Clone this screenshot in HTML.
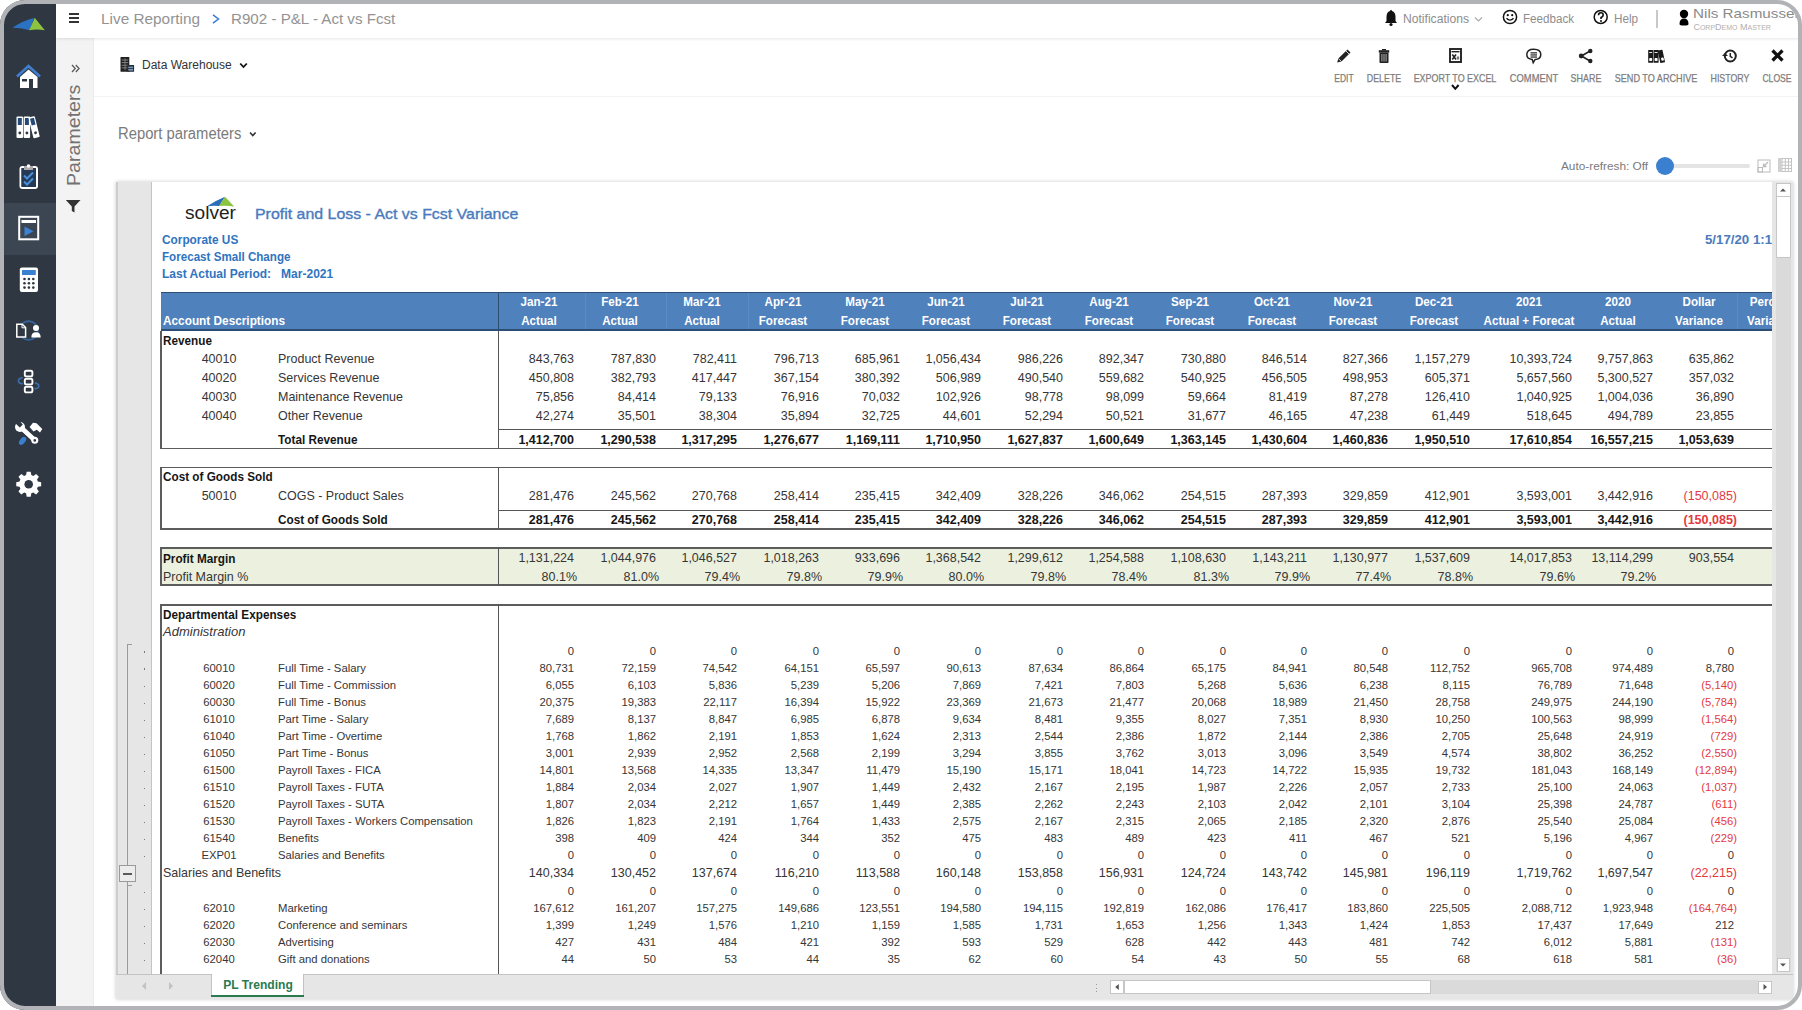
<!DOCTYPE html><html><head><meta charset="utf-8"><style>
*{box-sizing:border-box;margin:0;padding:0}
html,body{width:1802px;height:1010px;overflow:hidden;background:#fff;font-family:'Liberation Sans', sans-serif}
.t{position:absolute;white-space:nowrap}
.a{position:absolute}
svg{position:absolute;overflow:visible}
#app{position:absolute;left:0;top:0;width:1802px;height:1010px;border-radius:25px;overflow:hidden;background:#fff}
#frame{position:absolute;left:0;top:0;width:1802px;height:1010px;border:4px solid #b2b3b6;border-radius:25px;z-index:50}
</style></head><body>
<div id="app"><div class="a" style="left:0px;top:0px;width:56.00px;height:1010.00px;background:#2f3842;"></div><div class="a" style="left:0px;top:203px;width:56.00px;height:52.00px;background:#3c4652;"></div><svg style="left:0px;top:0px" width="56" height="40" viewBox="0 0 56 40"><path d="M12.5 27.8 Q22 21 33.8 18 L30 30.3 Q21 27.5 12.5 27.8Z" fill="#2c72c2"/><path d="M34.7 17.8 L44.8 30.3 Q37 28.5 29.2 30.3 Z" fill="#8cc43f"/></svg><svg style="left:0px;top:55px" width="56" height="40" viewBox="0 0 56 40"><path d="M17 21.5 L28.5 11 L40 21.5" fill="none" stroke="#3f7fd0" stroke-width="2.6"/><path d="M20 22 L28.5 14.5 L37.5 22 V33 H20Z" fill="#fff"/><rect x="22" y="24" width="5" height="2.5" fill="#2f3842"/><rect x="29" y="24" width="4" height="9" fill="#2f3842"/></svg><svg style="left:0px;top:110px" width="56" height="35" viewBox="0 0 56 35"><rect x="16.5" y="6.5" width="6.5" height="21.5" rx="1" fill="#fff"/><rect x="17.8" y="8" width="4" height="7" fill="#254a7a"/><circle cx="19.8" cy="23" r="1.4" fill="#2f3842"/>
<rect x="23.6" y="6.5" width="6.5" height="21.5" rx="1" fill="#fff"/><rect x="24.9" y="8" width="4" height="7" fill="#254a7a"/><circle cx="26.9" cy="23" r="1.4" fill="#2f3842"/>
<g transform="rotate(-14 34 17)"><rect x="30.8" y="6.5" width="6.5" height="21.5" rx="1" fill="#fff"/><rect x="32.1" y="8" width="4" height="7" fill="#254a7a"/><circle cx="34.1" cy="23" r="1.4" fill="#2f3842"/></g></svg><svg style="left:0px;top:160px" width="56" height="35" viewBox="0 0 56 35"><rect x="20.5" y="7" width="16.5" height="21" rx="2" fill="none" stroke="#fff" stroke-width="2"/><rect x="21.5" y="8" width="14.5" height="19" fill="#243a57"/><path d="M24 6 H33 V10 H24Z" fill="#aaa"/><circle cx="28.5" cy="6" r="1.8" fill="#fff"/>
<path d="M24 15.5 L27 18.5 L33 12.5 M24 21.5 L27 24.5 L33 18.5" fill="none" stroke="#4a90d9" stroke-width="2"/></svg><svg style="left:0px;top:210px" width="56" height="35" viewBox="0 0 56 35"><rect x="19.2" y="6.8" width="19" height="22.5" fill="none" stroke="#fff" stroke-width="2"/><rect x="21.5" y="10" width="14.5" height="3" fill="#fff"/><path d="M24.5 16.5 L33.5 21.3 L24.5 26 Z" fill="#3b82d6"/></svg><svg style="left:0px;top:262px" width="56" height="35" viewBox="0 0 56 35"><rect x="19.8" y="5.5" width="18.2" height="24.5" rx="2" fill="#fff"/><rect x="22" y="8" width="13.8" height="5" rx="0.5" fill="#3b7fd0"/>
<g fill="#2f3842"><circle cx="24.5" cy="17" r="1.3"/><circle cx="28.9" cy="17" r="1.3"/><circle cx="33.3" cy="17" r="1.3"/><circle cx="24.5" cy="21.3" r="1.3"/><circle cx="28.9" cy="21.3" r="1.3"/><circle cx="33.3" cy="21.3" r="1.3"/><circle cx="24.5" cy="25.6" r="1.3"/><circle cx="28.9" cy="25.6" r="1.3"/><circle cx="33.3" cy="25.6" r="1.3"/></g></svg><svg style="left:0px;top:313px" width="56" height="35" viewBox="0 0 56 35"><circle cx="28.6" cy="17.5" r="9.4" fill="none" stroke="#34649c" stroke-width="1.7"/>
<path d="M16.8 11.2 H22.3 L25.6 14.5 V24 H16.8Z" fill="#2f3842" stroke="#fff" stroke-width="1.5"/><path d="M22 11.5 V14.8 H25.3" fill="none" stroke="#fff" stroke-width="1"/><circle cx="36" cy="15" r="3" fill="#fff"/><path d="M31.3 24.5 Q31.3 19.3 36 19.3 Q40.7 19.3 40.7 24.5Z" fill="#fff"/></svg><svg style="left:0px;top:364px" width="56" height="35" viewBox="0 0 56 35"><path d="M22.5 13.8 Q17.8 14.5 18.5 17.5 Q19.3 20 22.8 19.6 M34.8 19 Q39.5 19.8 38.8 22.8 Q38 25 34.5 24.6" fill="none" stroke="#3a6fae" stroke-width="1.6"/>
<g fill="none" stroke="#fff" stroke-width="1.9"><rect x="24.8" y="6.8" width="7.6" height="5.6" rx="1.6"/><rect x="24.8" y="14.8" width="7.6" height="5.6" rx="1.6"/><rect x="24.8" y="22.8" width="7.6" height="5.6" rx="1.6"/></g></svg><svg style="left:0px;top:415px" width="56" height="35" viewBox="0 0 56 35"><ellipse cx="22.6" cy="25.8" rx="4.6" ry="2.7" transform="rotate(-52 22.6 25.8)" fill="#3b7fd0"/>
<path d="M21 12.5 L34.5 25" stroke="#fff" stroke-width="4.6" stroke-linecap="round"/><circle cx="34.8" cy="25.2" r="3.5" fill="#fff"/><circle cx="34.8" cy="25.4" r="1.3" fill="#2f3842"/>
<circle cx="20" cy="12" r="5" fill="#fff"/><path d="M18.2 4.5 L22.8 9.5 L19.8 12.5 L14.8 7.8 Z" fill="#2f3842"/>
<path d="M29.6 12 L33 7.8 L36.5 8.3 L42.3 14 L40 17.6 L36.8 14.8 L33.5 16.6 Z" fill="#fff"/></svg><svg style="left:0px;top:466px" width="56" height="35" viewBox="0 0 56 35"><polygon points="37.83,15.57 41.14,16.19 41.14,20.21 37.83,20.83 37.01,22.80 38.92,25.58 36.08,28.42 33.30,26.51 31.33,27.33 30.71,30.64 26.69,30.64 26.07,27.33 24.10,26.51 21.32,28.42 18.48,25.58 20.39,22.80 19.57,20.83 16.26,20.21 16.26,16.19 19.57,15.57 20.39,13.60 18.48,10.82 21.32,7.98 24.10,9.89 26.07,9.07 26.69,5.76 30.71,5.76 31.33,9.07 33.30,9.89 36.08,7.98 38.92,10.82 37.01,13.60" fill="#fff"/><circle cx="28.7" cy="18.2" r="4.3" fill="#2f3842"/></svg><div class="a" style="left:56px;top:38px;width:38.00px;height:972.00px;background:#f3f3f3;border-right:1px solid #ececec"></div><svg style="left:71px;top:64px" width="10" height="10" viewBox="0 0 10 10"><path d="M1 1 L4.3 4.5 L1 8 M4.8 1 L8.1 4.5 L4.8 8" fill="none" stroke="#555" stroke-width="1.2"/></svg><div class="t" style="left:80.5px;top:86px;font-size:18.5px;line-height:20px;color:#727272;transform:rotate(-90deg) scaleX(1.06);transform-origin:0 0;left:64px;top:186px;width:100px">Parameters</div><svg style="left:65px;top:199px" width="17" height="15" viewBox="0 0 17 15"><path d="M0.8 1 H15.5 L9.5 7.5 V13.5 L6.8 12 V7.5 Z" fill="#333"/></svg><div class="a" style="left:94px;top:96px;width:1704.00px;height:1.00px;background:#f3f3f3;"></div><svg style="left:119px;top:56px" width="17" height="17" viewBox="0 0 17 17"><rect x="1.5" y="1" width="8.8" height="14.8" rx="0.6" fill="#202020"/><g fill="#8a8a8a"><rect x="2.6" y="3.6" width="6.6" height="0.9"/><rect x="2.6" y="6.2" width="6.6" height="0.9"/><rect x="2.6" y="8.8" width="6.6" height="0.9"/><rect x="2.6" y="11.4" width="6.6" height="0.9"/><rect x="5.6" y="2.2" width="0.8" height="12"/></g><rect x="8.3" y="8.9" width="6.8" height="6.9" rx="0.6" fill="#262b33"/><g fill="#7895b8"><rect x="9.3" y="10.6" width="4.8" height="1.6"/><rect x="9.3" y="13" width="4.8" height="1.6"/></g></svg><div class="t" style="top:58.24px;font-size:12.3px;line-height:15px;color:#333;transform:scaleX(0.9767);transform-origin:0 0;left:141.50px;">Data Warehouse</div><svg style="left:239px;top:62px" width="10" height="8" viewBox="0 0 10 8"><path d="M1.2 1.5 L4.5 5 L7.8 1.5" fill="none" stroke="#111" stroke-width="1.8"/></svg><div class="t" style="top:123.86px;font-size:16px;line-height:20px;color:#7a7a7a;transform:scaleX(0.9243);transform-origin:0 0;left:117.70px;">Report parameters</div><svg style="left:249px;top:131px" width="9" height="7" viewBox="0 0 9 7"><path d="M1 1.5 L3.8 4.5 L6.6 1.5" fill="none" stroke="#333" stroke-width="1.6"/></svg><div class="t" style="top:71.53px;font-size:10.3px;line-height:13px;color:#7d7d7d;transform:scaleX(0.8269);transform-origin:50% 0;left:1193.60px;width:300px;text-align:center;-webkit-text-stroke:0.25px #7d7d7d;">EDIT</div><div class="t" style="top:71.53px;font-size:10.3px;line-height:13px;color:#7d7d7d;transform:scaleX(0.8585);transform-origin:50% 0;left:1233.80px;width:300px;text-align:center;-webkit-text-stroke:0.25px #7d7d7d;">DELETE</div><div class="t" style="top:71.53px;font-size:10.3px;line-height:13px;color:#7d7d7d;transform:scaleX(0.8667);transform-origin:50% 0;left:1305.15px;width:300px;text-align:center;-webkit-text-stroke:0.25px #7d7d7d;">EXPORT TO EXCEL</div><div class="t" style="top:71.53px;font-size:10.3px;line-height:13px;color:#7d7d7d;transform:scaleX(0.9077);transform-origin:50% 0;left:1383.65px;width:300px;text-align:center;-webkit-text-stroke:0.25px #7d7d7d;">COMMENT</div><div class="t" style="top:71.53px;font-size:10.3px;line-height:13px;color:#7d7d7d;transform:scaleX(0.8679);transform-origin:50% 0;left:1436.20px;width:300px;text-align:center;-webkit-text-stroke:0.25px #7d7d7d;">SHARE</div><div class="t" style="top:71.53px;font-size:10.3px;line-height:13px;color:#7d7d7d;transform:scaleX(0.8846);transform-origin:50% 0;left:1505.85px;width:300px;text-align:center;-webkit-text-stroke:0.25px #7d7d7d;">SEND TO ARCHIVE</div><div class="t" style="top:71.53px;font-size:10.3px;line-height:13px;color:#7d7d7d;transform:scaleX(0.8566);transform-origin:50% 0;left:1580.05px;width:300px;text-align:center;-webkit-text-stroke:0.25px #7d7d7d;">HISTORY</div><div class="t" style="top:71.53px;font-size:10.3px;line-height:13px;color:#7d7d7d;transform:scaleX(0.8362);transform-origin:50% 0;left:1627.40px;width:300px;text-align:center;-webkit-text-stroke:0.25px #7d7d7d;">CLOSE</div><svg style="left:1336px;top:48px" width="16" height="16" viewBox="0 0 16 16"><path d="M1.2 14.5 L2.3 10.5 L11.5 1.5 L14.5 4.5 L5.5 13.5 Z" fill="#222"/><path d="M2.3 10.5 L5.5 13.5" stroke="#fff" stroke-width="0.8"/><path d="M10 3 L13 6" stroke="#fff" stroke-width="0.8"/></svg><svg style="left:1378px;top:49px" width="12" height="15" viewBox="0 0 12 15"><rect x="0.8" y="1.2" width="10.4" height="2.4" fill="#222"/><rect x="4" y="0" width="4" height="1.5" fill="#222"/><path d="M1.5 3.6 H10.5 V13.2 Q10.5 14 9.7 14 H2.3 Q1.5 14 1.5 13.2Z" fill="#222"/><g fill="#999"><rect x="3.3" y="5" width="1.2" height="7.5"/><rect x="5.4" y="5" width="1.2" height="7.5"/><rect x="7.5" y="5" width="1.2" height="7.5"/></g></svg><svg style="left:1449px;top:48px" width="13" height="15" viewBox="0 0 13 15"><rect x="1" y="1" width="11" height="13" fill="none" stroke="#222" stroke-width="1.9"/><rect x="2.5" y="3" width="8" height="1.4" fill="#222"/><path d="M3.3 6.5 L7 11.5 M7 6.5 L3.3 11.5" stroke="#222" stroke-width="1.6"/><rect x="7.8" y="8.5" width="2.4" height="3" fill="#777"/></svg><svg style="left:1451px;top:84px" width="9" height="7" viewBox="0 0 9 7"><path d="M1 1 L4.3 4.8 L7.6 1" fill="none" stroke="#111" stroke-width="2"/></svg><svg style="left:1525px;top:48px" width="18" height="16" viewBox="0 0 18 16"><path d="M8.8 1.2 Q15.8 1.2 15.8 6.5 Q15.8 11.2 10 11.6 L8.2 14.6 L7.2 11.5 Q1.8 10.8 1.8 6.5 Q1.8 1.2 8.8 1.2Z" fill="none" stroke="#222" stroke-width="1.5"/><g fill="#333"><rect x="5.5" y="4.2" width="6.5" height="1.3"/><rect x="5.5" y="6.3" width="6.5" height="1.3"/><rect x="5.5" y="8.4" width="6.5" height="1.3"/></g></svg><svg style="left:1578px;top:48px" width="16" height="16" viewBox="0 0 16 16"><path d="M3.5 8 L12 3 M3.5 8 L12 13" stroke="#222" stroke-width="1.5"/><circle cx="3.2" cy="8" r="2.4" fill="#222"/><circle cx="12.3" cy="3" r="2.2" fill="#222"/><circle cx="12.3" cy="13" r="2.2" fill="#222"/></svg><svg style="left:1647px;top:48px" width="18" height="16" viewBox="0 0 18 16"><g fill="#1a1a1a"><rect x="1.2" y="2" width="5" height="12.8" rx="0.5"/><rect x="6.6" y="2" width="5" height="12.8" rx="0.5"/><rect x="12" y="2" width="4.8" height="12.8" rx="0.5" transform="rotate(-12 14.4 8.4)"/></g><g fill="#fff"><rect x="2.2" y="4" width="3" height="0.9"/><rect x="7.6" y="4" width="3" height="0.9"/><rect x="2.2" y="10" width="3" height="3" rx="0.8"/><rect x="7.6" y="10" width="3" height="3" rx="0.8"/></g><rect x="13.6" y="9.8" width="2.6" height="3" rx="0.8" transform="rotate(-12 14.4 8.4)" fill="#fff"/></svg><svg style="left:1721px;top:48px" width="17" height="16" viewBox="0 0 17 16"><circle cx="9.3" cy="8" r="5.5" fill="none" stroke="#222" stroke-width="2"/><path d="M1 8 L4 5 L7 8Z" fill="#222"/><path d="M9.3 5 V8.3 L11.5 9.8" fill="none" stroke="#222" stroke-width="1.5"/></svg><svg style="left:1770px;top:48px" width="15" height="15" viewBox="0 0 15 15"><path d="M2.5 2.5 L12.5 12.5 M12.5 2.5 L2.5 12.5" stroke="#111" stroke-width="3.3"/></svg><div class="t" style="top:158.55px;font-size:11.4px;line-height:14px;color:#7a7a7a;transform:scaleX(1.0362);transform-origin:0 0;left:1560.90px;">Auto-refresh: Off</div><div class="a" style="left:1664px;top:163.5px;width:86.00px;height:4.00px;background:#e4e4e4;border-radius:2px"></div><div class="a" style="left:1656px;top:157px;width:18px;height:18px;border-radius:50%;background:#3b7fd0"></div><svg style="left:1757px;top:159px" width="14" height="14" viewBox="0 0 14 14"><rect x="1" y="1" width="12" height="12" fill="none" stroke="#bbb" stroke-width="1"/><rect x="1" y="8.5" width="4.5" height="4.5" fill="none" stroke="#bbb" stroke-width="1"/><path d="M11 3 L6.5 7.5 M6.5 4.5 V7.5 H9.5" fill="none" stroke="#bbb" stroke-width="1.3"/></svg><svg style="left:1777px;top:157px" width="16" height="16" viewBox="0 0 16 16"><g fill="none" stroke="#c4c4c4" stroke-width="1"><rect x="1.5" y="1.5" width="13" height="13"/><path d="M1.5 5 H14.5 M1.5 8.3 H14.5 M1.5 11.5 H14.5 M5 1.5 V14.5 M8.3 1.5 V14.5 M11.5 1.5 V14.5"/></g><rect x="1" y="1" width="3.5" height="14" fill="#d0d0d0"/></svg><div class="a" style="left:116px;top:182px;width:1677.00px;height:817.00px;background:#e6e6e6;box-shadow:0 0 4px rgba(0,0,0,0.22)"></div><div class="a" style="left:152px;top:182px;width:1620.00px;height:792.00px;background:#ffffff;"></div><div class="a" style="left:151px;top:182px;width:1.00px;height:792.00px;background:#c9c9c9;"></div><div class="a" style="left:152px;top:182px;width:1620px;height:792px;overflow:hidden"><div class="a" style="left:-152px;top:-182px;width:1802px;height:1010px"><div class="a" style="left:161px;top:292px;width:1611.00px;height:38.50px;background:#4f81bd;"></div><div class="a" style="left:161px;top:291.5px;width:1611.00px;height:1.70px;background:#2c4d74;"></div><div class="a" style="left:161px;top:329.3px;width:1611.00px;height:1.50px;background:#2c4d74;"></div><div class="a" style="left:585.4px;top:293.2px;width:1.00px;height:36.10px;background:#5b8cc6;"></div><div class="a" style="left:666px;top:293.2px;width:1.00px;height:36.10px;background:#5b8cc6;"></div><div class="a" style="left:747.5px;top:293.2px;width:1.00px;height:36.10px;background:#5b8cc6;"></div><div class="a" style="left:1736.5px;top:293.2px;width:1.00px;height:36.10px;background:#5b8cc6;"></div><div class="a" style="left:498px;top:291.5px;width:1.00px;height:39.30px;background:#2c4d74;"></div><div class="t" style="top:312.67px;font-size:12.5px;line-height:16px;color:#ffffff;font-weight:bold;transform:scaleX(0.9450);transform-origin:0 0;left:162.50px;">Account Descriptions</div><div class="t" style="top:294.27px;font-size:12.5px;line-height:16px;color:#ffffff;font-weight:bold;transform:scaleX(0.9300);transform-origin:50% 0;left:439.00px;width:200px;text-align:center;">Jan-21</div><div class="t" style="top:312.57px;font-size:12.5px;line-height:16px;color:#ffffff;font-weight:bold;transform:scaleX(0.9300);transform-origin:50% 0;left:439.00px;width:200px;text-align:center;">Actual</div><div class="t" style="top:294.27px;font-size:12.5px;line-height:16px;color:#ffffff;font-weight:bold;transform:scaleX(0.9300);transform-origin:50% 0;left:520.39px;width:200px;text-align:center;">Feb-21</div><div class="t" style="top:312.57px;font-size:12.5px;line-height:16px;color:#ffffff;font-weight:bold;transform:scaleX(0.9300);transform-origin:50% 0;left:520.39px;width:200px;text-align:center;">Actual</div><div class="t" style="top:294.27px;font-size:12.5px;line-height:16px;color:#ffffff;font-weight:bold;transform:scaleX(0.9300);transform-origin:50% 0;left:601.78px;width:200px;text-align:center;">Mar-21</div><div class="t" style="top:312.57px;font-size:12.5px;line-height:16px;color:#ffffff;font-weight:bold;transform:scaleX(0.9300);transform-origin:50% 0;left:601.78px;width:200px;text-align:center;">Actual</div><div class="t" style="top:294.27px;font-size:12.5px;line-height:16px;color:#ffffff;font-weight:bold;transform:scaleX(0.9300);transform-origin:50% 0;left:683.17px;width:200px;text-align:center;">Apr-21</div><div class="t" style="top:312.57px;font-size:12.5px;line-height:16px;color:#ffffff;font-weight:bold;transform:scaleX(0.9300);transform-origin:50% 0;left:683.17px;width:200px;text-align:center;">Forecast</div><div class="t" style="top:294.27px;font-size:12.5px;line-height:16px;color:#ffffff;font-weight:bold;transform:scaleX(0.9300);transform-origin:50% 0;left:764.56px;width:200px;text-align:center;">May-21</div><div class="t" style="top:312.57px;font-size:12.5px;line-height:16px;color:#ffffff;font-weight:bold;transform:scaleX(0.9300);transform-origin:50% 0;left:764.56px;width:200px;text-align:center;">Forecast</div><div class="t" style="top:294.27px;font-size:12.5px;line-height:16px;color:#ffffff;font-weight:bold;transform:scaleX(0.9300);transform-origin:50% 0;left:845.95px;width:200px;text-align:center;">Jun-21</div><div class="t" style="top:312.57px;font-size:12.5px;line-height:16px;color:#ffffff;font-weight:bold;transform:scaleX(0.9300);transform-origin:50% 0;left:845.95px;width:200px;text-align:center;">Forecast</div><div class="t" style="top:294.27px;font-size:12.5px;line-height:16px;color:#ffffff;font-weight:bold;transform:scaleX(0.9300);transform-origin:50% 0;left:927.34px;width:200px;text-align:center;">Jul-21</div><div class="t" style="top:312.57px;font-size:12.5px;line-height:16px;color:#ffffff;font-weight:bold;transform:scaleX(0.9300);transform-origin:50% 0;left:927.34px;width:200px;text-align:center;">Forecast</div><div class="t" style="top:294.27px;font-size:12.5px;line-height:16px;color:#ffffff;font-weight:bold;transform:scaleX(0.9300);transform-origin:50% 0;left:1008.73px;width:200px;text-align:center;">Aug-21</div><div class="t" style="top:312.57px;font-size:12.5px;line-height:16px;color:#ffffff;font-weight:bold;transform:scaleX(0.9300);transform-origin:50% 0;left:1008.73px;width:200px;text-align:center;">Forecast</div><div class="t" style="top:294.27px;font-size:12.5px;line-height:16px;color:#ffffff;font-weight:bold;transform:scaleX(0.9300);transform-origin:50% 0;left:1090.12px;width:200px;text-align:center;">Sep-21</div><div class="t" style="top:312.57px;font-size:12.5px;line-height:16px;color:#ffffff;font-weight:bold;transform:scaleX(0.9300);transform-origin:50% 0;left:1090.12px;width:200px;text-align:center;">Forecast</div><div class="t" style="top:294.27px;font-size:12.5px;line-height:16px;color:#ffffff;font-weight:bold;transform:scaleX(0.9300);transform-origin:50% 0;left:1171.51px;width:200px;text-align:center;">Oct-21</div><div class="t" style="top:312.57px;font-size:12.5px;line-height:16px;color:#ffffff;font-weight:bold;transform:scaleX(0.9300);transform-origin:50% 0;left:1171.51px;width:200px;text-align:center;">Forecast</div><div class="t" style="top:294.27px;font-size:12.5px;line-height:16px;color:#ffffff;font-weight:bold;transform:scaleX(0.9300);transform-origin:50% 0;left:1252.90px;width:200px;text-align:center;">Nov-21</div><div class="t" style="top:312.57px;font-size:12.5px;line-height:16px;color:#ffffff;font-weight:bold;transform:scaleX(0.9300);transform-origin:50% 0;left:1252.90px;width:200px;text-align:center;">Forecast</div><div class="t" style="top:294.27px;font-size:12.5px;line-height:16px;color:#ffffff;font-weight:bold;transform:scaleX(0.9300);transform-origin:50% 0;left:1334.29px;width:200px;text-align:center;">Dec-21</div><div class="t" style="top:312.57px;font-size:12.5px;line-height:16px;color:#ffffff;font-weight:bold;transform:scaleX(0.9300);transform-origin:50% 0;left:1334.29px;width:200px;text-align:center;">Forecast</div><div class="t" style="top:294.27px;font-size:12.5px;line-height:16px;color:#ffffff;font-weight:bold;transform:scaleX(0.9300);transform-origin:50% 0;left:1428.50px;width:200px;text-align:center;">2021</div><div class="t" style="top:312.57px;font-size:12.5px;line-height:16px;color:#ffffff;font-weight:bold;transform:scaleX(0.9300);transform-origin:50% 0;left:1428.50px;width:200px;text-align:center;">Actual + Forecat</div><div class="t" style="top:294.27px;font-size:12.5px;line-height:16px;color:#ffffff;font-weight:bold;transform:scaleX(0.9300);transform-origin:50% 0;left:1518.30px;width:200px;text-align:center;">2020</div><div class="t" style="top:312.57px;font-size:12.5px;line-height:16px;color:#ffffff;font-weight:bold;transform:scaleX(0.9300);transform-origin:50% 0;left:1518.30px;width:200px;text-align:center;">Actual</div><div class="t" style="top:294.27px;font-size:12.5px;line-height:16px;color:#ffffff;font-weight:bold;transform:scaleX(0.9300);transform-origin:50% 0;left:1598.80px;width:200px;text-align:center;">Dollar</div><div class="t" style="top:312.57px;font-size:12.5px;line-height:16px;color:#ffffff;font-weight:bold;transform:scaleX(0.9300);transform-origin:50% 0;left:1598.80px;width:200px;text-align:center;">Variance</div><div class="t" style="top:294.27px;font-size:12.5px;line-height:16px;color:#ffffff;font-weight:bold;transform:scaleX(0.9300);transform-origin:50% 0;left:1671.00px;width:200px;text-align:center;">Percent</div><div class="t" style="top:312.57px;font-size:12.5px;line-height:16px;color:#ffffff;font-weight:bold;transform:scaleX(0.9300);transform-origin:50% 0;left:1671.00px;width:200px;text-align:center;">Variance</div><div class="t" style="top:332.70px;font-size:13.0px;line-height:16px;color:#161616;font-weight:bold;transform:scaleX(0.9038);transform-origin:0 0;left:162.80px;">Revenue</div><div class="t" style="top:351.33px;font-size:13.2px;line-height:16px;color:#363636;transform:scaleX(0.9470);transform-origin:50% 0;left:178.80px;width:80px;text-align:center;">40010</div><div class="t" style="top:351.33px;font-size:13.2px;line-height:16px;color:#363636;transform:scaleX(0.9470);transform-origin:0 0;left:278.30px;">Product Revenue</div><div class="t" style="top:351.33px;font-size:13.2px;line-height:16px;color:#363636;transform:scaleX(0.9470);transform-origin:100% 0;left:454.40px;width:120px;text-align:right;">843,763</div><div class="t" style="top:351.33px;font-size:13.2px;line-height:16px;color:#363636;transform:scaleX(0.9470);transform-origin:100% 0;left:535.80px;width:120px;text-align:right;">787,830</div><div class="t" style="top:351.33px;font-size:13.2px;line-height:16px;color:#363636;transform:scaleX(0.9470);transform-origin:100% 0;left:617.20px;width:120px;text-align:right;">782,411</div><div class="t" style="top:351.33px;font-size:13.2px;line-height:16px;color:#363636;transform:scaleX(0.9470);transform-origin:100% 0;left:698.60px;width:120px;text-align:right;">796,713</div><div class="t" style="top:351.33px;font-size:13.2px;line-height:16px;color:#363636;transform:scaleX(0.9470);transform-origin:100% 0;left:780.00px;width:120px;text-align:right;">685,961</div><div class="t" style="top:351.33px;font-size:13.2px;line-height:16px;color:#363636;transform:scaleX(0.9470);transform-origin:100% 0;left:861.40px;width:120px;text-align:right;">1,056,434</div><div class="t" style="top:351.33px;font-size:13.2px;line-height:16px;color:#363636;transform:scaleX(0.9470);transform-origin:100% 0;left:942.80px;width:120px;text-align:right;">986,226</div><div class="t" style="top:351.33px;font-size:13.2px;line-height:16px;color:#363636;transform:scaleX(0.9470);transform-origin:100% 0;left:1024.20px;width:120px;text-align:right;">892,347</div><div class="t" style="top:351.33px;font-size:13.2px;line-height:16px;color:#363636;transform:scaleX(0.9470);transform-origin:100% 0;left:1105.60px;width:120px;text-align:right;">730,880</div><div class="t" style="top:351.33px;font-size:13.2px;line-height:16px;color:#363636;transform:scaleX(0.9470);transform-origin:100% 0;left:1187.00px;width:120px;text-align:right;">846,514</div><div class="t" style="top:351.33px;font-size:13.2px;line-height:16px;color:#363636;transform:scaleX(0.9470);transform-origin:100% 0;left:1268.40px;width:120px;text-align:right;">827,366</div><div class="t" style="top:351.33px;font-size:13.2px;line-height:16px;color:#363636;transform:scaleX(0.9470);transform-origin:100% 0;left:1349.80px;width:120px;text-align:right;">1,157,279</div><div class="t" style="top:351.33px;font-size:13.2px;line-height:16px;color:#363636;transform:scaleX(0.9470);transform-origin:100% 0;left:1451.80px;width:120px;text-align:right;">10,393,724</div><div class="t" style="top:351.33px;font-size:13.2px;line-height:16px;color:#363636;transform:scaleX(0.9470);transform-origin:100% 0;left:1533.20px;width:120px;text-align:right;">9,757,863</div><div class="t" style="top:351.33px;font-size:13.2px;line-height:16px;color:#363636;transform:scaleX(0.9470);transform-origin:100% 0;left:1613.70px;width:120px;text-align:right;">635,862</div><div class="t" style="top:370.10px;font-size:13.2px;line-height:16px;color:#363636;transform:scaleX(0.9470);transform-origin:50% 0;left:178.80px;width:80px;text-align:center;">40020</div><div class="t" style="top:370.10px;font-size:13.2px;line-height:16px;color:#363636;transform:scaleX(0.9470);transform-origin:0 0;left:278.30px;">Services Revenue</div><div class="t" style="top:370.10px;font-size:13.2px;line-height:16px;color:#363636;transform:scaleX(0.9470);transform-origin:100% 0;left:454.40px;width:120px;text-align:right;">450,808</div><div class="t" style="top:370.10px;font-size:13.2px;line-height:16px;color:#363636;transform:scaleX(0.9470);transform-origin:100% 0;left:535.80px;width:120px;text-align:right;">382,793</div><div class="t" style="top:370.10px;font-size:13.2px;line-height:16px;color:#363636;transform:scaleX(0.9470);transform-origin:100% 0;left:617.20px;width:120px;text-align:right;">417,447</div><div class="t" style="top:370.10px;font-size:13.2px;line-height:16px;color:#363636;transform:scaleX(0.9470);transform-origin:100% 0;left:698.60px;width:120px;text-align:right;">367,154</div><div class="t" style="top:370.10px;font-size:13.2px;line-height:16px;color:#363636;transform:scaleX(0.9470);transform-origin:100% 0;left:780.00px;width:120px;text-align:right;">380,392</div><div class="t" style="top:370.10px;font-size:13.2px;line-height:16px;color:#363636;transform:scaleX(0.9470);transform-origin:100% 0;left:861.40px;width:120px;text-align:right;">506,989</div><div class="t" style="top:370.10px;font-size:13.2px;line-height:16px;color:#363636;transform:scaleX(0.9470);transform-origin:100% 0;left:942.80px;width:120px;text-align:right;">490,540</div><div class="t" style="top:370.10px;font-size:13.2px;line-height:16px;color:#363636;transform:scaleX(0.9470);transform-origin:100% 0;left:1024.20px;width:120px;text-align:right;">559,682</div><div class="t" style="top:370.10px;font-size:13.2px;line-height:16px;color:#363636;transform:scaleX(0.9470);transform-origin:100% 0;left:1105.60px;width:120px;text-align:right;">540,925</div><div class="t" style="top:370.10px;font-size:13.2px;line-height:16px;color:#363636;transform:scaleX(0.9470);transform-origin:100% 0;left:1187.00px;width:120px;text-align:right;">456,505</div><div class="t" style="top:370.10px;font-size:13.2px;line-height:16px;color:#363636;transform:scaleX(0.9470);transform-origin:100% 0;left:1268.40px;width:120px;text-align:right;">498,953</div><div class="t" style="top:370.10px;font-size:13.2px;line-height:16px;color:#363636;transform:scaleX(0.9470);transform-origin:100% 0;left:1349.80px;width:120px;text-align:right;">605,371</div><div class="t" style="top:370.10px;font-size:13.2px;line-height:16px;color:#363636;transform:scaleX(0.9470);transform-origin:100% 0;left:1451.80px;width:120px;text-align:right;">5,657,560</div><div class="t" style="top:370.10px;font-size:13.2px;line-height:16px;color:#363636;transform:scaleX(0.9470);transform-origin:100% 0;left:1533.20px;width:120px;text-align:right;">5,300,527</div><div class="t" style="top:370.10px;font-size:13.2px;line-height:16px;color:#363636;transform:scaleX(0.9470);transform-origin:100% 0;left:1613.70px;width:120px;text-align:right;">357,032</div><div class="t" style="top:388.87px;font-size:13.2px;line-height:16px;color:#363636;transform:scaleX(0.9470);transform-origin:50% 0;left:178.80px;width:80px;text-align:center;">40030</div><div class="t" style="top:388.87px;font-size:13.2px;line-height:16px;color:#363636;transform:scaleX(0.9470);transform-origin:0 0;left:278.30px;">Maintenance Revenue</div><div class="t" style="top:388.87px;font-size:13.2px;line-height:16px;color:#363636;transform:scaleX(0.9470);transform-origin:100% 0;left:454.40px;width:120px;text-align:right;">75,856</div><div class="t" style="top:388.87px;font-size:13.2px;line-height:16px;color:#363636;transform:scaleX(0.9470);transform-origin:100% 0;left:535.80px;width:120px;text-align:right;">84,414</div><div class="t" style="top:388.87px;font-size:13.2px;line-height:16px;color:#363636;transform:scaleX(0.9470);transform-origin:100% 0;left:617.20px;width:120px;text-align:right;">79,133</div><div class="t" style="top:388.87px;font-size:13.2px;line-height:16px;color:#363636;transform:scaleX(0.9470);transform-origin:100% 0;left:698.60px;width:120px;text-align:right;">76,916</div><div class="t" style="top:388.87px;font-size:13.2px;line-height:16px;color:#363636;transform:scaleX(0.9470);transform-origin:100% 0;left:780.00px;width:120px;text-align:right;">70,032</div><div class="t" style="top:388.87px;font-size:13.2px;line-height:16px;color:#363636;transform:scaleX(0.9470);transform-origin:100% 0;left:861.40px;width:120px;text-align:right;">102,926</div><div class="t" style="top:388.87px;font-size:13.2px;line-height:16px;color:#363636;transform:scaleX(0.9470);transform-origin:100% 0;left:942.80px;width:120px;text-align:right;">98,778</div><div class="t" style="top:388.87px;font-size:13.2px;line-height:16px;color:#363636;transform:scaleX(0.9470);transform-origin:100% 0;left:1024.20px;width:120px;text-align:right;">98,099</div><div class="t" style="top:388.87px;font-size:13.2px;line-height:16px;color:#363636;transform:scaleX(0.9470);transform-origin:100% 0;left:1105.60px;width:120px;text-align:right;">59,664</div><div class="t" style="top:388.87px;font-size:13.2px;line-height:16px;color:#363636;transform:scaleX(0.9470);transform-origin:100% 0;left:1187.00px;width:120px;text-align:right;">81,419</div><div class="t" style="top:388.87px;font-size:13.2px;line-height:16px;color:#363636;transform:scaleX(0.9470);transform-origin:100% 0;left:1268.40px;width:120px;text-align:right;">87,278</div><div class="t" style="top:388.87px;font-size:13.2px;line-height:16px;color:#363636;transform:scaleX(0.9470);transform-origin:100% 0;left:1349.80px;width:120px;text-align:right;">126,410</div><div class="t" style="top:388.87px;font-size:13.2px;line-height:16px;color:#363636;transform:scaleX(0.9470);transform-origin:100% 0;left:1451.80px;width:120px;text-align:right;">1,040,925</div><div class="t" style="top:388.87px;font-size:13.2px;line-height:16px;color:#363636;transform:scaleX(0.9470);transform-origin:100% 0;left:1533.20px;width:120px;text-align:right;">1,004,036</div><div class="t" style="top:388.87px;font-size:13.2px;line-height:16px;color:#363636;transform:scaleX(0.9470);transform-origin:100% 0;left:1613.70px;width:120px;text-align:right;">36,890</div><div class="t" style="top:407.64px;font-size:13.2px;line-height:16px;color:#363636;transform:scaleX(0.9470);transform-origin:50% 0;left:178.80px;width:80px;text-align:center;">40040</div><div class="t" style="top:407.64px;font-size:13.2px;line-height:16px;color:#363636;transform:scaleX(0.9470);transform-origin:0 0;left:278.30px;">Other Revenue</div><div class="t" style="top:407.64px;font-size:13.2px;line-height:16px;color:#363636;transform:scaleX(0.9470);transform-origin:100% 0;left:454.40px;width:120px;text-align:right;">42,274</div><div class="t" style="top:407.64px;font-size:13.2px;line-height:16px;color:#363636;transform:scaleX(0.9470);transform-origin:100% 0;left:535.80px;width:120px;text-align:right;">35,501</div><div class="t" style="top:407.64px;font-size:13.2px;line-height:16px;color:#363636;transform:scaleX(0.9470);transform-origin:100% 0;left:617.20px;width:120px;text-align:right;">38,304</div><div class="t" style="top:407.64px;font-size:13.2px;line-height:16px;color:#363636;transform:scaleX(0.9470);transform-origin:100% 0;left:698.60px;width:120px;text-align:right;">35,894</div><div class="t" style="top:407.64px;font-size:13.2px;line-height:16px;color:#363636;transform:scaleX(0.9470);transform-origin:100% 0;left:780.00px;width:120px;text-align:right;">32,725</div><div class="t" style="top:407.64px;font-size:13.2px;line-height:16px;color:#363636;transform:scaleX(0.9470);transform-origin:100% 0;left:861.40px;width:120px;text-align:right;">44,601</div><div class="t" style="top:407.64px;font-size:13.2px;line-height:16px;color:#363636;transform:scaleX(0.9470);transform-origin:100% 0;left:942.80px;width:120px;text-align:right;">52,294</div><div class="t" style="top:407.64px;font-size:13.2px;line-height:16px;color:#363636;transform:scaleX(0.9470);transform-origin:100% 0;left:1024.20px;width:120px;text-align:right;">50,521</div><div class="t" style="top:407.64px;font-size:13.2px;line-height:16px;color:#363636;transform:scaleX(0.9470);transform-origin:100% 0;left:1105.60px;width:120px;text-align:right;">31,677</div><div class="t" style="top:407.64px;font-size:13.2px;line-height:16px;color:#363636;transform:scaleX(0.9470);transform-origin:100% 0;left:1187.00px;width:120px;text-align:right;">46,165</div><div class="t" style="top:407.64px;font-size:13.2px;line-height:16px;color:#363636;transform:scaleX(0.9470);transform-origin:100% 0;left:1268.40px;width:120px;text-align:right;">47,238</div><div class="t" style="top:407.64px;font-size:13.2px;line-height:16px;color:#363636;transform:scaleX(0.9470);transform-origin:100% 0;left:1349.80px;width:120px;text-align:right;">61,449</div><div class="t" style="top:407.64px;font-size:13.2px;line-height:16px;color:#363636;transform:scaleX(0.9470);transform-origin:100% 0;left:1451.80px;width:120px;text-align:right;">518,645</div><div class="t" style="top:407.64px;font-size:13.2px;line-height:16px;color:#363636;transform:scaleX(0.9470);transform-origin:100% 0;left:1533.20px;width:120px;text-align:right;">494,789</div><div class="t" style="top:407.64px;font-size:13.2px;line-height:16px;color:#363636;transform:scaleX(0.9470);transform-origin:100% 0;left:1613.70px;width:120px;text-align:right;">23,855</div><div class="t" style="top:431.70px;font-size:13.0px;line-height:16px;color:#161616;font-weight:bold;transform:scaleX(0.9038);transform-origin:0 0;left:278.30px;">Total Revenue</div><div class="t" style="top:432.00px;font-size:13.0px;line-height:16px;color:#161616;font-weight:bold;transform:scaleX(0.9615);transform-origin:100% 0;left:454.40px;width:120px;text-align:right;">1,412,700</div><div class="t" style="top:432.00px;font-size:13.0px;line-height:16px;color:#161616;font-weight:bold;transform:scaleX(0.9615);transform-origin:100% 0;left:535.80px;width:120px;text-align:right;">1,290,538</div><div class="t" style="top:432.00px;font-size:13.0px;line-height:16px;color:#161616;font-weight:bold;transform:scaleX(0.9615);transform-origin:100% 0;left:617.20px;width:120px;text-align:right;">1,317,295</div><div class="t" style="top:432.00px;font-size:13.0px;line-height:16px;color:#161616;font-weight:bold;transform:scaleX(0.9615);transform-origin:100% 0;left:698.60px;width:120px;text-align:right;">1,276,677</div><div class="t" style="top:432.00px;font-size:13.0px;line-height:16px;color:#161616;font-weight:bold;transform:scaleX(0.9615);transform-origin:100% 0;left:780.00px;width:120px;text-align:right;">1,169,111</div><div class="t" style="top:432.00px;font-size:13.0px;line-height:16px;color:#161616;font-weight:bold;transform:scaleX(0.9615);transform-origin:100% 0;left:861.40px;width:120px;text-align:right;">1,710,950</div><div class="t" style="top:432.00px;font-size:13.0px;line-height:16px;color:#161616;font-weight:bold;transform:scaleX(0.9615);transform-origin:100% 0;left:942.80px;width:120px;text-align:right;">1,627,837</div><div class="t" style="top:432.00px;font-size:13.0px;line-height:16px;color:#161616;font-weight:bold;transform:scaleX(0.9615);transform-origin:100% 0;left:1024.20px;width:120px;text-align:right;">1,600,649</div><div class="t" style="top:432.00px;font-size:13.0px;line-height:16px;color:#161616;font-weight:bold;transform:scaleX(0.9615);transform-origin:100% 0;left:1105.60px;width:120px;text-align:right;">1,363,145</div><div class="t" style="top:432.00px;font-size:13.0px;line-height:16px;color:#161616;font-weight:bold;transform:scaleX(0.9615);transform-origin:100% 0;left:1187.00px;width:120px;text-align:right;">1,430,604</div><div class="t" style="top:432.00px;font-size:13.0px;line-height:16px;color:#161616;font-weight:bold;transform:scaleX(0.9615);transform-origin:100% 0;left:1268.40px;width:120px;text-align:right;">1,460,836</div><div class="t" style="top:432.00px;font-size:13.0px;line-height:16px;color:#161616;font-weight:bold;transform:scaleX(0.9615);transform-origin:100% 0;left:1349.80px;width:120px;text-align:right;">1,950,510</div><div class="t" style="top:432.00px;font-size:13.0px;line-height:16px;color:#161616;font-weight:bold;transform:scaleX(0.9615);transform-origin:100% 0;left:1451.80px;width:120px;text-align:right;">17,610,854</div><div class="t" style="top:432.00px;font-size:13.0px;line-height:16px;color:#161616;font-weight:bold;transform:scaleX(0.9615);transform-origin:100% 0;left:1533.20px;width:120px;text-align:right;">16,557,215</div><div class="t" style="top:432.00px;font-size:13.0px;line-height:16px;color:#161616;font-weight:bold;transform:scaleX(0.9615);transform-origin:100% 0;left:1613.70px;width:120px;text-align:right;">1,053,639</div><div class="a" style="left:160px;top:330.8px;width:2.00px;height:118.70px;background:#5c5c5c;"></div><div class="a" style="left:498px;top:330.8px;width:1.00px;height:118.70px;background:#555;"></div><div class="a" style="left:498px;top:428.8px;width:1274.00px;height:1.10px;background:#555;"></div><div class="a" style="left:160px;top:447.6px;width:1612.00px;height:1.90px;background:#5c5c5c;"></div><div class="a" style="left:160px;top:466.6px;width:1612.00px;height:1.80px;background:#5c5c5c;"></div><div class="a" style="left:160px;top:466.6px;width:2.00px;height:63.20px;background:#5c5c5c;"></div><div class="a" style="left:498px;top:466.6px;width:1.00px;height:63.20px;background:#555;"></div><div class="a" style="left:498px;top:509.5px;width:1274.00px;height:1.10px;background:#555;"></div><div class="a" style="left:160px;top:527.9px;width:1612.00px;height:1.90px;background:#5c5c5c;"></div><div class="t" style="top:469.40px;font-size:13.0px;line-height:16px;color:#161616;font-weight:bold;transform:scaleX(0.9038);transform-origin:0 0;left:162.80px;">Cost of Goods Sold</div><div class="t" style="top:488.43px;font-size:13.2px;line-height:16px;color:#363636;transform:scaleX(0.9470);transform-origin:50% 0;left:178.80px;width:80px;text-align:center;">50010</div><div class="t" style="top:488.43px;font-size:13.2px;line-height:16px;color:#363636;transform:scaleX(0.9470);transform-origin:0 0;left:278.30px;">COGS - Product Sales</div><div class="t" style="top:488.43px;font-size:13.2px;line-height:16px;color:#363636;transform:scaleX(0.9470);transform-origin:100% 0;left:454.40px;width:120px;text-align:right;">281,476</div><div class="t" style="top:488.43px;font-size:13.2px;line-height:16px;color:#363636;transform:scaleX(0.9470);transform-origin:100% 0;left:535.80px;width:120px;text-align:right;">245,562</div><div class="t" style="top:488.43px;font-size:13.2px;line-height:16px;color:#363636;transform:scaleX(0.9470);transform-origin:100% 0;left:617.20px;width:120px;text-align:right;">270,768</div><div class="t" style="top:488.43px;font-size:13.2px;line-height:16px;color:#363636;transform:scaleX(0.9470);transform-origin:100% 0;left:698.60px;width:120px;text-align:right;">258,414</div><div class="t" style="top:488.43px;font-size:13.2px;line-height:16px;color:#363636;transform:scaleX(0.9470);transform-origin:100% 0;left:780.00px;width:120px;text-align:right;">235,415</div><div class="t" style="top:488.43px;font-size:13.2px;line-height:16px;color:#363636;transform:scaleX(0.9470);transform-origin:100% 0;left:861.40px;width:120px;text-align:right;">342,409</div><div class="t" style="top:488.43px;font-size:13.2px;line-height:16px;color:#363636;transform:scaleX(0.9470);transform-origin:100% 0;left:942.80px;width:120px;text-align:right;">328,226</div><div class="t" style="top:488.43px;font-size:13.2px;line-height:16px;color:#363636;transform:scaleX(0.9470);transform-origin:100% 0;left:1024.20px;width:120px;text-align:right;">346,062</div><div class="t" style="top:488.43px;font-size:13.2px;line-height:16px;color:#363636;transform:scaleX(0.9470);transform-origin:100% 0;left:1105.60px;width:120px;text-align:right;">254,515</div><div class="t" style="top:488.43px;font-size:13.2px;line-height:16px;color:#363636;transform:scaleX(0.9470);transform-origin:100% 0;left:1187.00px;width:120px;text-align:right;">287,393</div><div class="t" style="top:488.43px;font-size:13.2px;line-height:16px;color:#363636;transform:scaleX(0.9470);transform-origin:100% 0;left:1268.40px;width:120px;text-align:right;">329,859</div><div class="t" style="top:488.43px;font-size:13.2px;line-height:16px;color:#363636;transform:scaleX(0.9470);transform-origin:100% 0;left:1349.80px;width:120px;text-align:right;">412,901</div><div class="t" style="top:488.43px;font-size:13.2px;line-height:16px;color:#363636;transform:scaleX(0.9470);transform-origin:100% 0;left:1451.80px;width:120px;text-align:right;">3,593,001</div><div class="t" style="top:488.43px;font-size:13.2px;line-height:16px;color:#363636;transform:scaleX(0.9470);transform-origin:100% 0;left:1533.20px;width:120px;text-align:right;">3,442,916</div><div class="t" style="top:488.43px;font-size:13.2px;line-height:16px;color:#e33a3f;transform:scaleX(0.9470);transform-origin:100% 0;left:1616.70px;width:120px;text-align:right;">(150,085)</div><div class="t" style="top:511.60px;font-size:13.0px;line-height:16px;color:#161616;font-weight:bold;transform:scaleX(0.9038);transform-origin:0 0;left:278.30px;">Cost of Goods Sold</div><div class="t" style="top:511.90px;font-size:13.0px;line-height:16px;color:#161616;font-weight:bold;transform:scaleX(0.9615);transform-origin:100% 0;left:454.40px;width:120px;text-align:right;">281,476</div><div class="t" style="top:511.90px;font-size:13.0px;line-height:16px;color:#161616;font-weight:bold;transform:scaleX(0.9615);transform-origin:100% 0;left:535.80px;width:120px;text-align:right;">245,562</div><div class="t" style="top:511.90px;font-size:13.0px;line-height:16px;color:#161616;font-weight:bold;transform:scaleX(0.9615);transform-origin:100% 0;left:617.20px;width:120px;text-align:right;">270,768</div><div class="t" style="top:511.90px;font-size:13.0px;line-height:16px;color:#161616;font-weight:bold;transform:scaleX(0.9615);transform-origin:100% 0;left:698.60px;width:120px;text-align:right;">258,414</div><div class="t" style="top:511.90px;font-size:13.0px;line-height:16px;color:#161616;font-weight:bold;transform:scaleX(0.9615);transform-origin:100% 0;left:780.00px;width:120px;text-align:right;">235,415</div><div class="t" style="top:511.90px;font-size:13.0px;line-height:16px;color:#161616;font-weight:bold;transform:scaleX(0.9615);transform-origin:100% 0;left:861.40px;width:120px;text-align:right;">342,409</div><div class="t" style="top:511.90px;font-size:13.0px;line-height:16px;color:#161616;font-weight:bold;transform:scaleX(0.9615);transform-origin:100% 0;left:942.80px;width:120px;text-align:right;">328,226</div><div class="t" style="top:511.90px;font-size:13.0px;line-height:16px;color:#161616;font-weight:bold;transform:scaleX(0.9615);transform-origin:100% 0;left:1024.20px;width:120px;text-align:right;">346,062</div><div class="t" style="top:511.90px;font-size:13.0px;line-height:16px;color:#161616;font-weight:bold;transform:scaleX(0.9615);transform-origin:100% 0;left:1105.60px;width:120px;text-align:right;">254,515</div><div class="t" style="top:511.90px;font-size:13.0px;line-height:16px;color:#161616;font-weight:bold;transform:scaleX(0.9615);transform-origin:100% 0;left:1187.00px;width:120px;text-align:right;">287,393</div><div class="t" style="top:511.90px;font-size:13.0px;line-height:16px;color:#161616;font-weight:bold;transform:scaleX(0.9615);transform-origin:100% 0;left:1268.40px;width:120px;text-align:right;">329,859</div><div class="t" style="top:511.90px;font-size:13.0px;line-height:16px;color:#161616;font-weight:bold;transform:scaleX(0.9615);transform-origin:100% 0;left:1349.80px;width:120px;text-align:right;">412,901</div><div class="t" style="top:511.90px;font-size:13.0px;line-height:16px;color:#161616;font-weight:bold;transform:scaleX(0.9615);transform-origin:100% 0;left:1451.80px;width:120px;text-align:right;">3,593,001</div><div class="t" style="top:511.90px;font-size:13.0px;line-height:16px;color:#161616;font-weight:bold;transform:scaleX(0.9615);transform-origin:100% 0;left:1533.20px;width:120px;text-align:right;">3,442,916</div><div class="t" style="top:511.90px;font-size:13.0px;line-height:16px;color:#e33a3f;font-weight:bold;transform:scaleX(0.9615);transform-origin:100% 0;left:1616.70px;width:120px;text-align:right;">(150,085)</div><div class="a" style="left:161px;top:548px;width:1611.00px;height:37.00px;background:#ebf1de;"></div><div class="a" style="left:160px;top:546.9px;width:1612.00px;height:1.80px;background:#5c5c5c;"></div><div class="a" style="left:160px;top:584.4px;width:1612.00px;height:1.80px;background:#5c5c5c;"></div><div class="a" style="left:160px;top:546.9px;width:2.00px;height:39.30px;background:#5c5c5c;"></div><div class="a" style="left:498px;top:546.9px;width:1.00px;height:39.30px;background:#555;"></div><div class="t" style="top:550.80px;font-size:13.0px;line-height:16px;color:#161616;font-weight:bold;transform:scaleX(0.9038);transform-origin:0 0;left:162.80px;">Profit Margin</div><div class="t" style="top:550.03px;font-size:13.2px;line-height:16px;color:#363636;transform:scaleX(0.9470);transform-origin:100% 0;left:454.40px;width:120px;text-align:right;">1,131,224</div><div class="t" style="top:550.03px;font-size:13.2px;line-height:16px;color:#363636;transform:scaleX(0.9470);transform-origin:100% 0;left:535.80px;width:120px;text-align:right;">1,044,976</div><div class="t" style="top:550.03px;font-size:13.2px;line-height:16px;color:#363636;transform:scaleX(0.9470);transform-origin:100% 0;left:617.20px;width:120px;text-align:right;">1,046,527</div><div class="t" style="top:550.03px;font-size:13.2px;line-height:16px;color:#363636;transform:scaleX(0.9470);transform-origin:100% 0;left:698.60px;width:120px;text-align:right;">1,018,263</div><div class="t" style="top:550.03px;font-size:13.2px;line-height:16px;color:#363636;transform:scaleX(0.9470);transform-origin:100% 0;left:780.00px;width:120px;text-align:right;">933,696</div><div class="t" style="top:550.03px;font-size:13.2px;line-height:16px;color:#363636;transform:scaleX(0.9470);transform-origin:100% 0;left:861.40px;width:120px;text-align:right;">1,368,542</div><div class="t" style="top:550.03px;font-size:13.2px;line-height:16px;color:#363636;transform:scaleX(0.9470);transform-origin:100% 0;left:942.80px;width:120px;text-align:right;">1,299,612</div><div class="t" style="top:550.03px;font-size:13.2px;line-height:16px;color:#363636;transform:scaleX(0.9470);transform-origin:100% 0;left:1024.20px;width:120px;text-align:right;">1,254,588</div><div class="t" style="top:550.03px;font-size:13.2px;line-height:16px;color:#363636;transform:scaleX(0.9470);transform-origin:100% 0;left:1105.60px;width:120px;text-align:right;">1,108,630</div><div class="t" style="top:550.03px;font-size:13.2px;line-height:16px;color:#363636;transform:scaleX(0.9470);transform-origin:100% 0;left:1187.00px;width:120px;text-align:right;">1,143,211</div><div class="t" style="top:550.03px;font-size:13.2px;line-height:16px;color:#363636;transform:scaleX(0.9470);transform-origin:100% 0;left:1268.40px;width:120px;text-align:right;">1,130,977</div><div class="t" style="top:550.03px;font-size:13.2px;line-height:16px;color:#363636;transform:scaleX(0.9470);transform-origin:100% 0;left:1349.80px;width:120px;text-align:right;">1,537,609</div><div class="t" style="top:550.03px;font-size:13.2px;line-height:16px;color:#363636;transform:scaleX(0.9470);transform-origin:100% 0;left:1451.80px;width:120px;text-align:right;">14,017,853</div><div class="t" style="top:550.03px;font-size:13.2px;line-height:16px;color:#363636;transform:scaleX(0.9470);transform-origin:100% 0;left:1533.20px;width:120px;text-align:right;">13,114,299</div><div class="t" style="top:550.03px;font-size:13.2px;line-height:16px;color:#363636;transform:scaleX(0.9470);transform-origin:100% 0;left:1613.70px;width:120px;text-align:right;">903,554</div><div class="t" style="top:568.73px;font-size:13.2px;line-height:16px;color:#363636;transform:scaleX(0.9470);transform-origin:0 0;left:162.80px;">Profit Margin %</div><div class="t" style="top:568.73px;font-size:13.2px;line-height:16px;color:#363636;transform:scaleX(0.9470);transform-origin:100% 0;left:457.40px;width:120px;text-align:right;">80.1%</div><div class="t" style="top:568.73px;font-size:13.2px;line-height:16px;color:#363636;transform:scaleX(0.9470);transform-origin:100% 0;left:538.80px;width:120px;text-align:right;">81.0%</div><div class="t" style="top:568.73px;font-size:13.2px;line-height:16px;color:#363636;transform:scaleX(0.9470);transform-origin:100% 0;left:620.20px;width:120px;text-align:right;">79.4%</div><div class="t" style="top:568.73px;font-size:13.2px;line-height:16px;color:#363636;transform:scaleX(0.9470);transform-origin:100% 0;left:701.60px;width:120px;text-align:right;">79.8%</div><div class="t" style="top:568.73px;font-size:13.2px;line-height:16px;color:#363636;transform:scaleX(0.9470);transform-origin:100% 0;left:783.00px;width:120px;text-align:right;">79.9%</div><div class="t" style="top:568.73px;font-size:13.2px;line-height:16px;color:#363636;transform:scaleX(0.9470);transform-origin:100% 0;left:864.40px;width:120px;text-align:right;">80.0%</div><div class="t" style="top:568.73px;font-size:13.2px;line-height:16px;color:#363636;transform:scaleX(0.9470);transform-origin:100% 0;left:945.80px;width:120px;text-align:right;">79.8%</div><div class="t" style="top:568.73px;font-size:13.2px;line-height:16px;color:#363636;transform:scaleX(0.9470);transform-origin:100% 0;left:1027.20px;width:120px;text-align:right;">78.4%</div><div class="t" style="top:568.73px;font-size:13.2px;line-height:16px;color:#363636;transform:scaleX(0.9470);transform-origin:100% 0;left:1108.60px;width:120px;text-align:right;">81.3%</div><div class="t" style="top:568.73px;font-size:13.2px;line-height:16px;color:#363636;transform:scaleX(0.9470);transform-origin:100% 0;left:1190.00px;width:120px;text-align:right;">79.9%</div><div class="t" style="top:568.73px;font-size:13.2px;line-height:16px;color:#363636;transform:scaleX(0.9470);transform-origin:100% 0;left:1271.40px;width:120px;text-align:right;">77.4%</div><div class="t" style="top:568.73px;font-size:13.2px;line-height:16px;color:#363636;transform:scaleX(0.9470);transform-origin:100% 0;left:1352.80px;width:120px;text-align:right;">78.8%</div><div class="t" style="top:568.73px;font-size:13.2px;line-height:16px;color:#363636;transform:scaleX(0.9470);transform-origin:100% 0;left:1454.80px;width:120px;text-align:right;">79.6%</div><div class="t" style="top:568.73px;font-size:13.2px;line-height:16px;color:#363636;transform:scaleX(0.9470);transform-origin:100% 0;left:1536.20px;width:120px;text-align:right;">79.2%</div><div class="a" style="left:160px;top:604.2px;width:1612.00px;height:1.80px;background:#5c5c5c;"></div><div class="a" style="left:160px;top:604.2px;width:2.00px;height:369.80px;background:#5c5c5c;"></div><div class="a" style="left:498px;top:604.2px;width:1.00px;height:369.80px;background:#555;"></div><div class="t" style="top:606.70px;font-size:13.0px;line-height:16px;color:#161616;font-weight:bold;transform:scaleX(0.9038);transform-origin:0 0;left:162.80px;">Departmental Expenses</div><div class="t" style="top:624.00px;font-size:13px;line-height:16px;color:#363636;font-style:italic;transform:scaleX(1.0016);transform-origin:0 0;left:162.80px;">Administration</div><div class="t" style="top:643.76px;font-size:11.8px;line-height:15px;color:#363636;transform:scaleX(0.9576);transform-origin:100% 0;left:454.40px;width:120px;text-align:right;">0</div><div class="t" style="top:643.76px;font-size:11.8px;line-height:15px;color:#363636;transform:scaleX(0.9576);transform-origin:100% 0;left:535.80px;width:120px;text-align:right;">0</div><div class="t" style="top:643.76px;font-size:11.8px;line-height:15px;color:#363636;transform:scaleX(0.9576);transform-origin:100% 0;left:617.20px;width:120px;text-align:right;">0</div><div class="t" style="top:643.76px;font-size:11.8px;line-height:15px;color:#363636;transform:scaleX(0.9576);transform-origin:100% 0;left:698.60px;width:120px;text-align:right;">0</div><div class="t" style="top:643.76px;font-size:11.8px;line-height:15px;color:#363636;transform:scaleX(0.9576);transform-origin:100% 0;left:780.00px;width:120px;text-align:right;">0</div><div class="t" style="top:643.76px;font-size:11.8px;line-height:15px;color:#363636;transform:scaleX(0.9576);transform-origin:100% 0;left:861.40px;width:120px;text-align:right;">0</div><div class="t" style="top:643.76px;font-size:11.8px;line-height:15px;color:#363636;transform:scaleX(0.9576);transform-origin:100% 0;left:942.80px;width:120px;text-align:right;">0</div><div class="t" style="top:643.76px;font-size:11.8px;line-height:15px;color:#363636;transform:scaleX(0.9576);transform-origin:100% 0;left:1024.20px;width:120px;text-align:right;">0</div><div class="t" style="top:643.76px;font-size:11.8px;line-height:15px;color:#363636;transform:scaleX(0.9576);transform-origin:100% 0;left:1105.60px;width:120px;text-align:right;">0</div><div class="t" style="top:643.76px;font-size:11.8px;line-height:15px;color:#363636;transform:scaleX(0.9576);transform-origin:100% 0;left:1187.00px;width:120px;text-align:right;">0</div><div class="t" style="top:643.76px;font-size:11.8px;line-height:15px;color:#363636;transform:scaleX(0.9576);transform-origin:100% 0;left:1268.40px;width:120px;text-align:right;">0</div><div class="t" style="top:643.76px;font-size:11.8px;line-height:15px;color:#363636;transform:scaleX(0.9576);transform-origin:100% 0;left:1349.80px;width:120px;text-align:right;">0</div><div class="t" style="top:643.76px;font-size:11.8px;line-height:15px;color:#363636;transform:scaleX(0.9576);transform-origin:100% 0;left:1451.80px;width:120px;text-align:right;">0</div><div class="t" style="top:643.76px;font-size:11.8px;line-height:15px;color:#363636;transform:scaleX(0.9576);transform-origin:100% 0;left:1533.20px;width:120px;text-align:right;">0</div><div class="t" style="top:643.76px;font-size:11.8px;line-height:15px;color:#363636;transform:scaleX(0.9576);transform-origin:100% 0;left:1613.70px;width:120px;text-align:right;">0</div><div class="t" style="top:660.81px;font-size:11.8px;line-height:15px;color:#363636;transform:scaleX(0.9576);transform-origin:50% 0;left:178.80px;width:80px;text-align:center;">60010</div><div class="t" style="top:660.81px;font-size:11.8px;line-height:15px;color:#363636;transform:scaleX(0.9576);transform-origin:0 0;left:278.30px;">Full Time - Salary</div><div class="t" style="top:660.81px;font-size:11.8px;line-height:15px;color:#363636;transform:scaleX(0.9576);transform-origin:100% 0;left:454.40px;width:120px;text-align:right;">80,731</div><div class="t" style="top:660.81px;font-size:11.8px;line-height:15px;color:#363636;transform:scaleX(0.9576);transform-origin:100% 0;left:535.80px;width:120px;text-align:right;">72,159</div><div class="t" style="top:660.81px;font-size:11.8px;line-height:15px;color:#363636;transform:scaleX(0.9576);transform-origin:100% 0;left:617.20px;width:120px;text-align:right;">74,542</div><div class="t" style="top:660.81px;font-size:11.8px;line-height:15px;color:#363636;transform:scaleX(0.9576);transform-origin:100% 0;left:698.60px;width:120px;text-align:right;">64,151</div><div class="t" style="top:660.81px;font-size:11.8px;line-height:15px;color:#363636;transform:scaleX(0.9576);transform-origin:100% 0;left:780.00px;width:120px;text-align:right;">65,597</div><div class="t" style="top:660.81px;font-size:11.8px;line-height:15px;color:#363636;transform:scaleX(0.9576);transform-origin:100% 0;left:861.40px;width:120px;text-align:right;">90,613</div><div class="t" style="top:660.81px;font-size:11.8px;line-height:15px;color:#363636;transform:scaleX(0.9576);transform-origin:100% 0;left:942.80px;width:120px;text-align:right;">87,634</div><div class="t" style="top:660.81px;font-size:11.8px;line-height:15px;color:#363636;transform:scaleX(0.9576);transform-origin:100% 0;left:1024.20px;width:120px;text-align:right;">86,864</div><div class="t" style="top:660.81px;font-size:11.8px;line-height:15px;color:#363636;transform:scaleX(0.9576);transform-origin:100% 0;left:1105.60px;width:120px;text-align:right;">65,175</div><div class="t" style="top:660.81px;font-size:11.8px;line-height:15px;color:#363636;transform:scaleX(0.9576);transform-origin:100% 0;left:1187.00px;width:120px;text-align:right;">84,941</div><div class="t" style="top:660.81px;font-size:11.8px;line-height:15px;color:#363636;transform:scaleX(0.9576);transform-origin:100% 0;left:1268.40px;width:120px;text-align:right;">80,548</div><div class="t" style="top:660.81px;font-size:11.8px;line-height:15px;color:#363636;transform:scaleX(0.9576);transform-origin:100% 0;left:1349.80px;width:120px;text-align:right;">112,752</div><div class="t" style="top:660.81px;font-size:11.8px;line-height:15px;color:#363636;transform:scaleX(0.9576);transform-origin:100% 0;left:1451.80px;width:120px;text-align:right;">965,708</div><div class="t" style="top:660.81px;font-size:11.8px;line-height:15px;color:#363636;transform:scaleX(0.9576);transform-origin:100% 0;left:1533.20px;width:120px;text-align:right;">974,489</div><div class="t" style="top:660.81px;font-size:11.8px;line-height:15px;color:#363636;transform:scaleX(0.9576);transform-origin:100% 0;left:1613.70px;width:120px;text-align:right;">8,780</div><div class="t" style="top:677.86px;font-size:11.8px;line-height:15px;color:#363636;transform:scaleX(0.9576);transform-origin:50% 0;left:178.80px;width:80px;text-align:center;">60020</div><div class="t" style="top:677.86px;font-size:11.8px;line-height:15px;color:#363636;transform:scaleX(0.9576);transform-origin:0 0;left:278.30px;">Full Time - Commission</div><div class="t" style="top:677.86px;font-size:11.8px;line-height:15px;color:#363636;transform:scaleX(0.9576);transform-origin:100% 0;left:454.40px;width:120px;text-align:right;">6,055</div><div class="t" style="top:677.86px;font-size:11.8px;line-height:15px;color:#363636;transform:scaleX(0.9576);transform-origin:100% 0;left:535.80px;width:120px;text-align:right;">6,103</div><div class="t" style="top:677.86px;font-size:11.8px;line-height:15px;color:#363636;transform:scaleX(0.9576);transform-origin:100% 0;left:617.20px;width:120px;text-align:right;">5,836</div><div class="t" style="top:677.86px;font-size:11.8px;line-height:15px;color:#363636;transform:scaleX(0.9576);transform-origin:100% 0;left:698.60px;width:120px;text-align:right;">5,239</div><div class="t" style="top:677.86px;font-size:11.8px;line-height:15px;color:#363636;transform:scaleX(0.9576);transform-origin:100% 0;left:780.00px;width:120px;text-align:right;">5,206</div><div class="t" style="top:677.86px;font-size:11.8px;line-height:15px;color:#363636;transform:scaleX(0.9576);transform-origin:100% 0;left:861.40px;width:120px;text-align:right;">7,869</div><div class="t" style="top:677.86px;font-size:11.8px;line-height:15px;color:#363636;transform:scaleX(0.9576);transform-origin:100% 0;left:942.80px;width:120px;text-align:right;">7,421</div><div class="t" style="top:677.86px;font-size:11.8px;line-height:15px;color:#363636;transform:scaleX(0.9576);transform-origin:100% 0;left:1024.20px;width:120px;text-align:right;">7,803</div><div class="t" style="top:677.86px;font-size:11.8px;line-height:15px;color:#363636;transform:scaleX(0.9576);transform-origin:100% 0;left:1105.60px;width:120px;text-align:right;">5,268</div><div class="t" style="top:677.86px;font-size:11.8px;line-height:15px;color:#363636;transform:scaleX(0.9576);transform-origin:100% 0;left:1187.00px;width:120px;text-align:right;">5,636</div><div class="t" style="top:677.86px;font-size:11.8px;line-height:15px;color:#363636;transform:scaleX(0.9576);transform-origin:100% 0;left:1268.40px;width:120px;text-align:right;">6,238</div><div class="t" style="top:677.86px;font-size:11.8px;line-height:15px;color:#363636;transform:scaleX(0.9576);transform-origin:100% 0;left:1349.80px;width:120px;text-align:right;">8,115</div><div class="t" style="top:677.86px;font-size:11.8px;line-height:15px;color:#363636;transform:scaleX(0.9576);transform-origin:100% 0;left:1451.80px;width:120px;text-align:right;">76,789</div><div class="t" style="top:677.86px;font-size:11.8px;line-height:15px;color:#363636;transform:scaleX(0.9576);transform-origin:100% 0;left:1533.20px;width:120px;text-align:right;">71,648</div><div class="t" style="top:677.86px;font-size:11.8px;line-height:15px;color:#e33a3f;transform:scaleX(0.9576);transform-origin:100% 0;left:1616.70px;width:120px;text-align:right;">(5,140)</div><div class="t" style="top:694.91px;font-size:11.8px;line-height:15px;color:#363636;transform:scaleX(0.9576);transform-origin:50% 0;left:178.80px;width:80px;text-align:center;">60030</div><div class="t" style="top:694.91px;font-size:11.8px;line-height:15px;color:#363636;transform:scaleX(0.9576);transform-origin:0 0;left:278.30px;">Full Time - Bonus</div><div class="t" style="top:694.91px;font-size:11.8px;line-height:15px;color:#363636;transform:scaleX(0.9576);transform-origin:100% 0;left:454.40px;width:120px;text-align:right;">20,375</div><div class="t" style="top:694.91px;font-size:11.8px;line-height:15px;color:#363636;transform:scaleX(0.9576);transform-origin:100% 0;left:535.80px;width:120px;text-align:right;">19,383</div><div class="t" style="top:694.91px;font-size:11.8px;line-height:15px;color:#363636;transform:scaleX(0.9576);transform-origin:100% 0;left:617.20px;width:120px;text-align:right;">22,117</div><div class="t" style="top:694.91px;font-size:11.8px;line-height:15px;color:#363636;transform:scaleX(0.9576);transform-origin:100% 0;left:698.60px;width:120px;text-align:right;">16,394</div><div class="t" style="top:694.91px;font-size:11.8px;line-height:15px;color:#363636;transform:scaleX(0.9576);transform-origin:100% 0;left:780.00px;width:120px;text-align:right;">15,922</div><div class="t" style="top:694.91px;font-size:11.8px;line-height:15px;color:#363636;transform:scaleX(0.9576);transform-origin:100% 0;left:861.40px;width:120px;text-align:right;">23,369</div><div class="t" style="top:694.91px;font-size:11.8px;line-height:15px;color:#363636;transform:scaleX(0.9576);transform-origin:100% 0;left:942.80px;width:120px;text-align:right;">21,673</div><div class="t" style="top:694.91px;font-size:11.8px;line-height:15px;color:#363636;transform:scaleX(0.9576);transform-origin:100% 0;left:1024.20px;width:120px;text-align:right;">21,477</div><div class="t" style="top:694.91px;font-size:11.8px;line-height:15px;color:#363636;transform:scaleX(0.9576);transform-origin:100% 0;left:1105.60px;width:120px;text-align:right;">20,068</div><div class="t" style="top:694.91px;font-size:11.8px;line-height:15px;color:#363636;transform:scaleX(0.9576);transform-origin:100% 0;left:1187.00px;width:120px;text-align:right;">18,989</div><div class="t" style="top:694.91px;font-size:11.8px;line-height:15px;color:#363636;transform:scaleX(0.9576);transform-origin:100% 0;left:1268.40px;width:120px;text-align:right;">21,450</div><div class="t" style="top:694.91px;font-size:11.8px;line-height:15px;color:#363636;transform:scaleX(0.9576);transform-origin:100% 0;left:1349.80px;width:120px;text-align:right;">28,758</div><div class="t" style="top:694.91px;font-size:11.8px;line-height:15px;color:#363636;transform:scaleX(0.9576);transform-origin:100% 0;left:1451.80px;width:120px;text-align:right;">249,975</div><div class="t" style="top:694.91px;font-size:11.8px;line-height:15px;color:#363636;transform:scaleX(0.9576);transform-origin:100% 0;left:1533.20px;width:120px;text-align:right;">244,190</div><div class="t" style="top:694.91px;font-size:11.8px;line-height:15px;color:#e33a3f;transform:scaleX(0.9576);transform-origin:100% 0;left:1616.70px;width:120px;text-align:right;">(5,784)</div><div class="t" style="top:711.96px;font-size:11.8px;line-height:15px;color:#363636;transform:scaleX(0.9576);transform-origin:50% 0;left:178.80px;width:80px;text-align:center;">61010</div><div class="t" style="top:711.96px;font-size:11.8px;line-height:15px;color:#363636;transform:scaleX(0.9576);transform-origin:0 0;left:278.30px;">Part Time - Salary</div><div class="t" style="top:711.96px;font-size:11.8px;line-height:15px;color:#363636;transform:scaleX(0.9576);transform-origin:100% 0;left:454.40px;width:120px;text-align:right;">7,689</div><div class="t" style="top:711.96px;font-size:11.8px;line-height:15px;color:#363636;transform:scaleX(0.9576);transform-origin:100% 0;left:535.80px;width:120px;text-align:right;">8,137</div><div class="t" style="top:711.96px;font-size:11.8px;line-height:15px;color:#363636;transform:scaleX(0.9576);transform-origin:100% 0;left:617.20px;width:120px;text-align:right;">8,847</div><div class="t" style="top:711.96px;font-size:11.8px;line-height:15px;color:#363636;transform:scaleX(0.9576);transform-origin:100% 0;left:698.60px;width:120px;text-align:right;">6,985</div><div class="t" style="top:711.96px;font-size:11.8px;line-height:15px;color:#363636;transform:scaleX(0.9576);transform-origin:100% 0;left:780.00px;width:120px;text-align:right;">6,878</div><div class="t" style="top:711.96px;font-size:11.8px;line-height:15px;color:#363636;transform:scaleX(0.9576);transform-origin:100% 0;left:861.40px;width:120px;text-align:right;">9,634</div><div class="t" style="top:711.96px;font-size:11.8px;line-height:15px;color:#363636;transform:scaleX(0.9576);transform-origin:100% 0;left:942.80px;width:120px;text-align:right;">8,481</div><div class="t" style="top:711.96px;font-size:11.8px;line-height:15px;color:#363636;transform:scaleX(0.9576);transform-origin:100% 0;left:1024.20px;width:120px;text-align:right;">9,355</div><div class="t" style="top:711.96px;font-size:11.8px;line-height:15px;color:#363636;transform:scaleX(0.9576);transform-origin:100% 0;left:1105.60px;width:120px;text-align:right;">8,027</div><div class="t" style="top:711.96px;font-size:11.8px;line-height:15px;color:#363636;transform:scaleX(0.9576);transform-origin:100% 0;left:1187.00px;width:120px;text-align:right;">7,351</div><div class="t" style="top:711.96px;font-size:11.8px;line-height:15px;color:#363636;transform:scaleX(0.9576);transform-origin:100% 0;left:1268.40px;width:120px;text-align:right;">8,930</div><div class="t" style="top:711.96px;font-size:11.8px;line-height:15px;color:#363636;transform:scaleX(0.9576);transform-origin:100% 0;left:1349.80px;width:120px;text-align:right;">10,250</div><div class="t" style="top:711.96px;font-size:11.8px;line-height:15px;color:#363636;transform:scaleX(0.9576);transform-origin:100% 0;left:1451.80px;width:120px;text-align:right;">100,563</div><div class="t" style="top:711.96px;font-size:11.8px;line-height:15px;color:#363636;transform:scaleX(0.9576);transform-origin:100% 0;left:1533.20px;width:120px;text-align:right;">98,999</div><div class="t" style="top:711.96px;font-size:11.8px;line-height:15px;color:#e33a3f;transform:scaleX(0.9576);transform-origin:100% 0;left:1616.70px;width:120px;text-align:right;">(1,564)</div><div class="t" style="top:729.01px;font-size:11.8px;line-height:15px;color:#363636;transform:scaleX(0.9576);transform-origin:50% 0;left:178.80px;width:80px;text-align:center;">61040</div><div class="t" style="top:729.01px;font-size:11.8px;line-height:15px;color:#363636;transform:scaleX(0.9576);transform-origin:0 0;left:278.30px;">Part Time - Overtime</div><div class="t" style="top:729.01px;font-size:11.8px;line-height:15px;color:#363636;transform:scaleX(0.9576);transform-origin:100% 0;left:454.40px;width:120px;text-align:right;">1,768</div><div class="t" style="top:729.01px;font-size:11.8px;line-height:15px;color:#363636;transform:scaleX(0.9576);transform-origin:100% 0;left:535.80px;width:120px;text-align:right;">1,862</div><div class="t" style="top:729.01px;font-size:11.8px;line-height:15px;color:#363636;transform:scaleX(0.9576);transform-origin:100% 0;left:617.20px;width:120px;text-align:right;">2,191</div><div class="t" style="top:729.01px;font-size:11.8px;line-height:15px;color:#363636;transform:scaleX(0.9576);transform-origin:100% 0;left:698.60px;width:120px;text-align:right;">1,853</div><div class="t" style="top:729.01px;font-size:11.8px;line-height:15px;color:#363636;transform:scaleX(0.9576);transform-origin:100% 0;left:780.00px;width:120px;text-align:right;">1,624</div><div class="t" style="top:729.01px;font-size:11.8px;line-height:15px;color:#363636;transform:scaleX(0.9576);transform-origin:100% 0;left:861.40px;width:120px;text-align:right;">2,313</div><div class="t" style="top:729.01px;font-size:11.8px;line-height:15px;color:#363636;transform:scaleX(0.9576);transform-origin:100% 0;left:942.80px;width:120px;text-align:right;">2,544</div><div class="t" style="top:729.01px;font-size:11.8px;line-height:15px;color:#363636;transform:scaleX(0.9576);transform-origin:100% 0;left:1024.20px;width:120px;text-align:right;">2,386</div><div class="t" style="top:729.01px;font-size:11.8px;line-height:15px;color:#363636;transform:scaleX(0.9576);transform-origin:100% 0;left:1105.60px;width:120px;text-align:right;">1,872</div><div class="t" style="top:729.01px;font-size:11.8px;line-height:15px;color:#363636;transform:scaleX(0.9576);transform-origin:100% 0;left:1187.00px;width:120px;text-align:right;">2,144</div><div class="t" style="top:729.01px;font-size:11.8px;line-height:15px;color:#363636;transform:scaleX(0.9576);transform-origin:100% 0;left:1268.40px;width:120px;text-align:right;">2,386</div><div class="t" style="top:729.01px;font-size:11.8px;line-height:15px;color:#363636;transform:scaleX(0.9576);transform-origin:100% 0;left:1349.80px;width:120px;text-align:right;">2,705</div><div class="t" style="top:729.01px;font-size:11.8px;line-height:15px;color:#363636;transform:scaleX(0.9576);transform-origin:100% 0;left:1451.80px;width:120px;text-align:right;">25,648</div><div class="t" style="top:729.01px;font-size:11.8px;line-height:15px;color:#363636;transform:scaleX(0.9576);transform-origin:100% 0;left:1533.20px;width:120px;text-align:right;">24,919</div><div class="t" style="top:729.01px;font-size:11.8px;line-height:15px;color:#e33a3f;transform:scaleX(0.9576);transform-origin:100% 0;left:1616.70px;width:120px;text-align:right;">(729)</div><div class="t" style="top:746.06px;font-size:11.8px;line-height:15px;color:#363636;transform:scaleX(0.9576);transform-origin:50% 0;left:178.80px;width:80px;text-align:center;">61050</div><div class="t" style="top:746.06px;font-size:11.8px;line-height:15px;color:#363636;transform:scaleX(0.9576);transform-origin:0 0;left:278.30px;">Part Time - Bonus</div><div class="t" style="top:746.06px;font-size:11.8px;line-height:15px;color:#363636;transform:scaleX(0.9576);transform-origin:100% 0;left:454.40px;width:120px;text-align:right;">3,001</div><div class="t" style="top:746.06px;font-size:11.8px;line-height:15px;color:#363636;transform:scaleX(0.9576);transform-origin:100% 0;left:535.80px;width:120px;text-align:right;">2,939</div><div class="t" style="top:746.06px;font-size:11.8px;line-height:15px;color:#363636;transform:scaleX(0.9576);transform-origin:100% 0;left:617.20px;width:120px;text-align:right;">2,952</div><div class="t" style="top:746.06px;font-size:11.8px;line-height:15px;color:#363636;transform:scaleX(0.9576);transform-origin:100% 0;left:698.60px;width:120px;text-align:right;">2,568</div><div class="t" style="top:746.06px;font-size:11.8px;line-height:15px;color:#363636;transform:scaleX(0.9576);transform-origin:100% 0;left:780.00px;width:120px;text-align:right;">2,199</div><div class="t" style="top:746.06px;font-size:11.8px;line-height:15px;color:#363636;transform:scaleX(0.9576);transform-origin:100% 0;left:861.40px;width:120px;text-align:right;">3,294</div><div class="t" style="top:746.06px;font-size:11.8px;line-height:15px;color:#363636;transform:scaleX(0.9576);transform-origin:100% 0;left:942.80px;width:120px;text-align:right;">3,855</div><div class="t" style="top:746.06px;font-size:11.8px;line-height:15px;color:#363636;transform:scaleX(0.9576);transform-origin:100% 0;left:1024.20px;width:120px;text-align:right;">3,762</div><div class="t" style="top:746.06px;font-size:11.8px;line-height:15px;color:#363636;transform:scaleX(0.9576);transform-origin:100% 0;left:1105.60px;width:120px;text-align:right;">3,013</div><div class="t" style="top:746.06px;font-size:11.8px;line-height:15px;color:#363636;transform:scaleX(0.9576);transform-origin:100% 0;left:1187.00px;width:120px;text-align:right;">3,096</div><div class="t" style="top:746.06px;font-size:11.8px;line-height:15px;color:#363636;transform:scaleX(0.9576);transform-origin:100% 0;left:1268.40px;width:120px;text-align:right;">3,549</div><div class="t" style="top:746.06px;font-size:11.8px;line-height:15px;color:#363636;transform:scaleX(0.9576);transform-origin:100% 0;left:1349.80px;width:120px;text-align:right;">4,574</div><div class="t" style="top:746.06px;font-size:11.8px;line-height:15px;color:#363636;transform:scaleX(0.9576);transform-origin:100% 0;left:1451.80px;width:120px;text-align:right;">38,802</div><div class="t" style="top:746.06px;font-size:11.8px;line-height:15px;color:#363636;transform:scaleX(0.9576);transform-origin:100% 0;left:1533.20px;width:120px;text-align:right;">36,252</div><div class="t" style="top:746.06px;font-size:11.8px;line-height:15px;color:#e33a3f;transform:scaleX(0.9576);transform-origin:100% 0;left:1616.70px;width:120px;text-align:right;">(2,550)</div><div class="t" style="top:763.11px;font-size:11.8px;line-height:15px;color:#363636;transform:scaleX(0.9576);transform-origin:50% 0;left:178.80px;width:80px;text-align:center;">61500</div><div class="t" style="top:763.11px;font-size:11.8px;line-height:15px;color:#363636;transform:scaleX(0.9576);transform-origin:0 0;left:278.30px;">Payroll Taxes - FICA</div><div class="t" style="top:763.11px;font-size:11.8px;line-height:15px;color:#363636;transform:scaleX(0.9576);transform-origin:100% 0;left:454.40px;width:120px;text-align:right;">14,801</div><div class="t" style="top:763.11px;font-size:11.8px;line-height:15px;color:#363636;transform:scaleX(0.9576);transform-origin:100% 0;left:535.80px;width:120px;text-align:right;">13,568</div><div class="t" style="top:763.11px;font-size:11.8px;line-height:15px;color:#363636;transform:scaleX(0.9576);transform-origin:100% 0;left:617.20px;width:120px;text-align:right;">14,335</div><div class="t" style="top:763.11px;font-size:11.8px;line-height:15px;color:#363636;transform:scaleX(0.9576);transform-origin:100% 0;left:698.60px;width:120px;text-align:right;">13,347</div><div class="t" style="top:763.11px;font-size:11.8px;line-height:15px;color:#363636;transform:scaleX(0.9576);transform-origin:100% 0;left:780.00px;width:120px;text-align:right;">11,479</div><div class="t" style="top:763.11px;font-size:11.8px;line-height:15px;color:#363636;transform:scaleX(0.9576);transform-origin:100% 0;left:861.40px;width:120px;text-align:right;">15,190</div><div class="t" style="top:763.11px;font-size:11.8px;line-height:15px;color:#363636;transform:scaleX(0.9576);transform-origin:100% 0;left:942.80px;width:120px;text-align:right;">15,171</div><div class="t" style="top:763.11px;font-size:11.8px;line-height:15px;color:#363636;transform:scaleX(0.9576);transform-origin:100% 0;left:1024.20px;width:120px;text-align:right;">18,041</div><div class="t" style="top:763.11px;font-size:11.8px;line-height:15px;color:#363636;transform:scaleX(0.9576);transform-origin:100% 0;left:1105.60px;width:120px;text-align:right;">14,723</div><div class="t" style="top:763.11px;font-size:11.8px;line-height:15px;color:#363636;transform:scaleX(0.9576);transform-origin:100% 0;left:1187.00px;width:120px;text-align:right;">14,722</div><div class="t" style="top:763.11px;font-size:11.8px;line-height:15px;color:#363636;transform:scaleX(0.9576);transform-origin:100% 0;left:1268.40px;width:120px;text-align:right;">15,935</div><div class="t" style="top:763.11px;font-size:11.8px;line-height:15px;color:#363636;transform:scaleX(0.9576);transform-origin:100% 0;left:1349.80px;width:120px;text-align:right;">19,732</div><div class="t" style="top:763.11px;font-size:11.8px;line-height:15px;color:#363636;transform:scaleX(0.9576);transform-origin:100% 0;left:1451.80px;width:120px;text-align:right;">181,043</div><div class="t" style="top:763.11px;font-size:11.8px;line-height:15px;color:#363636;transform:scaleX(0.9576);transform-origin:100% 0;left:1533.20px;width:120px;text-align:right;">168,149</div><div class="t" style="top:763.11px;font-size:11.8px;line-height:15px;color:#e33a3f;transform:scaleX(0.9576);transform-origin:100% 0;left:1616.70px;width:120px;text-align:right;">(12,894)</div><div class="t" style="top:780.16px;font-size:11.8px;line-height:15px;color:#363636;transform:scaleX(0.9576);transform-origin:50% 0;left:178.80px;width:80px;text-align:center;">61510</div><div class="t" style="top:780.16px;font-size:11.8px;line-height:15px;color:#363636;transform:scaleX(0.9576);transform-origin:0 0;left:278.30px;">Payroll Taxes - FUTA</div><div class="t" style="top:780.16px;font-size:11.8px;line-height:15px;color:#363636;transform:scaleX(0.9576);transform-origin:100% 0;left:454.40px;width:120px;text-align:right;">1,884</div><div class="t" style="top:780.16px;font-size:11.8px;line-height:15px;color:#363636;transform:scaleX(0.9576);transform-origin:100% 0;left:535.80px;width:120px;text-align:right;">2,034</div><div class="t" style="top:780.16px;font-size:11.8px;line-height:15px;color:#363636;transform:scaleX(0.9576);transform-origin:100% 0;left:617.20px;width:120px;text-align:right;">2,027</div><div class="t" style="top:780.16px;font-size:11.8px;line-height:15px;color:#363636;transform:scaleX(0.9576);transform-origin:100% 0;left:698.60px;width:120px;text-align:right;">1,907</div><div class="t" style="top:780.16px;font-size:11.8px;line-height:15px;color:#363636;transform:scaleX(0.9576);transform-origin:100% 0;left:780.00px;width:120px;text-align:right;">1,449</div><div class="t" style="top:780.16px;font-size:11.8px;line-height:15px;color:#363636;transform:scaleX(0.9576);transform-origin:100% 0;left:861.40px;width:120px;text-align:right;">2,432</div><div class="t" style="top:780.16px;font-size:11.8px;line-height:15px;color:#363636;transform:scaleX(0.9576);transform-origin:100% 0;left:942.80px;width:120px;text-align:right;">2,167</div><div class="t" style="top:780.16px;font-size:11.8px;line-height:15px;color:#363636;transform:scaleX(0.9576);transform-origin:100% 0;left:1024.20px;width:120px;text-align:right;">2,195</div><div class="t" style="top:780.16px;font-size:11.8px;line-height:15px;color:#363636;transform:scaleX(0.9576);transform-origin:100% 0;left:1105.60px;width:120px;text-align:right;">1,987</div><div class="t" style="top:780.16px;font-size:11.8px;line-height:15px;color:#363636;transform:scaleX(0.9576);transform-origin:100% 0;left:1187.00px;width:120px;text-align:right;">2,226</div><div class="t" style="top:780.16px;font-size:11.8px;line-height:15px;color:#363636;transform:scaleX(0.9576);transform-origin:100% 0;left:1268.40px;width:120px;text-align:right;">2,057</div><div class="t" style="top:780.16px;font-size:11.8px;line-height:15px;color:#363636;transform:scaleX(0.9576);transform-origin:100% 0;left:1349.80px;width:120px;text-align:right;">2,733</div><div class="t" style="top:780.16px;font-size:11.8px;line-height:15px;color:#363636;transform:scaleX(0.9576);transform-origin:100% 0;left:1451.80px;width:120px;text-align:right;">25,100</div><div class="t" style="top:780.16px;font-size:11.8px;line-height:15px;color:#363636;transform:scaleX(0.9576);transform-origin:100% 0;left:1533.20px;width:120px;text-align:right;">24,063</div><div class="t" style="top:780.16px;font-size:11.8px;line-height:15px;color:#e33a3f;transform:scaleX(0.9576);transform-origin:100% 0;left:1616.70px;width:120px;text-align:right;">(1,037)</div><div class="t" style="top:797.21px;font-size:11.8px;line-height:15px;color:#363636;transform:scaleX(0.9576);transform-origin:50% 0;left:178.80px;width:80px;text-align:center;">61520</div><div class="t" style="top:797.21px;font-size:11.8px;line-height:15px;color:#363636;transform:scaleX(0.9576);transform-origin:0 0;left:278.30px;">Payroll Taxes - SUTA</div><div class="t" style="top:797.21px;font-size:11.8px;line-height:15px;color:#363636;transform:scaleX(0.9576);transform-origin:100% 0;left:454.40px;width:120px;text-align:right;">1,807</div><div class="t" style="top:797.21px;font-size:11.8px;line-height:15px;color:#363636;transform:scaleX(0.9576);transform-origin:100% 0;left:535.80px;width:120px;text-align:right;">2,034</div><div class="t" style="top:797.21px;font-size:11.8px;line-height:15px;color:#363636;transform:scaleX(0.9576);transform-origin:100% 0;left:617.20px;width:120px;text-align:right;">2,212</div><div class="t" style="top:797.21px;font-size:11.8px;line-height:15px;color:#363636;transform:scaleX(0.9576);transform-origin:100% 0;left:698.60px;width:120px;text-align:right;">1,657</div><div class="t" style="top:797.21px;font-size:11.8px;line-height:15px;color:#363636;transform:scaleX(0.9576);transform-origin:100% 0;left:780.00px;width:120px;text-align:right;">1,449</div><div class="t" style="top:797.21px;font-size:11.8px;line-height:15px;color:#363636;transform:scaleX(0.9576);transform-origin:100% 0;left:861.40px;width:120px;text-align:right;">2,385</div><div class="t" style="top:797.21px;font-size:11.8px;line-height:15px;color:#363636;transform:scaleX(0.9576);transform-origin:100% 0;left:942.80px;width:120px;text-align:right;">2,262</div><div class="t" style="top:797.21px;font-size:11.8px;line-height:15px;color:#363636;transform:scaleX(0.9576);transform-origin:100% 0;left:1024.20px;width:120px;text-align:right;">2,243</div><div class="t" style="top:797.21px;font-size:11.8px;line-height:15px;color:#363636;transform:scaleX(0.9576);transform-origin:100% 0;left:1105.60px;width:120px;text-align:right;">2,103</div><div class="t" style="top:797.21px;font-size:11.8px;line-height:15px;color:#363636;transform:scaleX(0.9576);transform-origin:100% 0;left:1187.00px;width:120px;text-align:right;">2,042</div><div class="t" style="top:797.21px;font-size:11.8px;line-height:15px;color:#363636;transform:scaleX(0.9576);transform-origin:100% 0;left:1268.40px;width:120px;text-align:right;">2,101</div><div class="t" style="top:797.21px;font-size:11.8px;line-height:15px;color:#363636;transform:scaleX(0.9576);transform-origin:100% 0;left:1349.80px;width:120px;text-align:right;">3,104</div><div class="t" style="top:797.21px;font-size:11.8px;line-height:15px;color:#363636;transform:scaleX(0.9576);transform-origin:100% 0;left:1451.80px;width:120px;text-align:right;">25,398</div><div class="t" style="top:797.21px;font-size:11.8px;line-height:15px;color:#363636;transform:scaleX(0.9576);transform-origin:100% 0;left:1533.20px;width:120px;text-align:right;">24,787</div><div class="t" style="top:797.21px;font-size:11.8px;line-height:15px;color:#e33a3f;transform:scaleX(0.9576);transform-origin:100% 0;left:1616.70px;width:120px;text-align:right;">(611)</div><div class="t" style="top:814.26px;font-size:11.8px;line-height:15px;color:#363636;transform:scaleX(0.9576);transform-origin:50% 0;left:178.80px;width:80px;text-align:center;">61530</div><div class="t" style="top:814.26px;font-size:11.8px;line-height:15px;color:#363636;transform:scaleX(0.9576);transform-origin:0 0;left:278.30px;">Payroll Taxes - Workers Compensation</div><div class="t" style="top:814.26px;font-size:11.8px;line-height:15px;color:#363636;transform:scaleX(0.9576);transform-origin:100% 0;left:454.40px;width:120px;text-align:right;">1,826</div><div class="t" style="top:814.26px;font-size:11.8px;line-height:15px;color:#363636;transform:scaleX(0.9576);transform-origin:100% 0;left:535.80px;width:120px;text-align:right;">1,823</div><div class="t" style="top:814.26px;font-size:11.8px;line-height:15px;color:#363636;transform:scaleX(0.9576);transform-origin:100% 0;left:617.20px;width:120px;text-align:right;">2,191</div><div class="t" style="top:814.26px;font-size:11.8px;line-height:15px;color:#363636;transform:scaleX(0.9576);transform-origin:100% 0;left:698.60px;width:120px;text-align:right;">1,764</div><div class="t" style="top:814.26px;font-size:11.8px;line-height:15px;color:#363636;transform:scaleX(0.9576);transform-origin:100% 0;left:780.00px;width:120px;text-align:right;">1,433</div><div class="t" style="top:814.26px;font-size:11.8px;line-height:15px;color:#363636;transform:scaleX(0.9576);transform-origin:100% 0;left:861.40px;width:120px;text-align:right;">2,575</div><div class="t" style="top:814.26px;font-size:11.8px;line-height:15px;color:#363636;transform:scaleX(0.9576);transform-origin:100% 0;left:942.80px;width:120px;text-align:right;">2,167</div><div class="t" style="top:814.26px;font-size:11.8px;line-height:15px;color:#363636;transform:scaleX(0.9576);transform-origin:100% 0;left:1024.20px;width:120px;text-align:right;">2,315</div><div class="t" style="top:814.26px;font-size:11.8px;line-height:15px;color:#363636;transform:scaleX(0.9576);transform-origin:100% 0;left:1105.60px;width:120px;text-align:right;">2,065</div><div class="t" style="top:814.26px;font-size:11.8px;line-height:15px;color:#363636;transform:scaleX(0.9576);transform-origin:100% 0;left:1187.00px;width:120px;text-align:right;">2,185</div><div class="t" style="top:814.26px;font-size:11.8px;line-height:15px;color:#363636;transform:scaleX(0.9576);transform-origin:100% 0;left:1268.40px;width:120px;text-align:right;">2,320</div><div class="t" style="top:814.26px;font-size:11.8px;line-height:15px;color:#363636;transform:scaleX(0.9576);transform-origin:100% 0;left:1349.80px;width:120px;text-align:right;">2,876</div><div class="t" style="top:814.26px;font-size:11.8px;line-height:15px;color:#363636;transform:scaleX(0.9576);transform-origin:100% 0;left:1451.80px;width:120px;text-align:right;">25,540</div><div class="t" style="top:814.26px;font-size:11.8px;line-height:15px;color:#363636;transform:scaleX(0.9576);transform-origin:100% 0;left:1533.20px;width:120px;text-align:right;">25,084</div><div class="t" style="top:814.26px;font-size:11.8px;line-height:15px;color:#e33a3f;transform:scaleX(0.9576);transform-origin:100% 0;left:1616.70px;width:120px;text-align:right;">(456)</div><div class="t" style="top:831.31px;font-size:11.8px;line-height:15px;color:#363636;transform:scaleX(0.9576);transform-origin:50% 0;left:178.80px;width:80px;text-align:center;">61540</div><div class="t" style="top:831.31px;font-size:11.8px;line-height:15px;color:#363636;transform:scaleX(0.9576);transform-origin:0 0;left:278.30px;">Benefits</div><div class="t" style="top:831.31px;font-size:11.8px;line-height:15px;color:#363636;transform:scaleX(0.9576);transform-origin:100% 0;left:454.40px;width:120px;text-align:right;">398</div><div class="t" style="top:831.31px;font-size:11.8px;line-height:15px;color:#363636;transform:scaleX(0.9576);transform-origin:100% 0;left:535.80px;width:120px;text-align:right;">409</div><div class="t" style="top:831.31px;font-size:11.8px;line-height:15px;color:#363636;transform:scaleX(0.9576);transform-origin:100% 0;left:617.20px;width:120px;text-align:right;">424</div><div class="t" style="top:831.31px;font-size:11.8px;line-height:15px;color:#363636;transform:scaleX(0.9576);transform-origin:100% 0;left:698.60px;width:120px;text-align:right;">344</div><div class="t" style="top:831.31px;font-size:11.8px;line-height:15px;color:#363636;transform:scaleX(0.9576);transform-origin:100% 0;left:780.00px;width:120px;text-align:right;">352</div><div class="t" style="top:831.31px;font-size:11.8px;line-height:15px;color:#363636;transform:scaleX(0.9576);transform-origin:100% 0;left:861.40px;width:120px;text-align:right;">475</div><div class="t" style="top:831.31px;font-size:11.8px;line-height:15px;color:#363636;transform:scaleX(0.9576);transform-origin:100% 0;left:942.80px;width:120px;text-align:right;">483</div><div class="t" style="top:831.31px;font-size:11.8px;line-height:15px;color:#363636;transform:scaleX(0.9576);transform-origin:100% 0;left:1024.20px;width:120px;text-align:right;">489</div><div class="t" style="top:831.31px;font-size:11.8px;line-height:15px;color:#363636;transform:scaleX(0.9576);transform-origin:100% 0;left:1105.60px;width:120px;text-align:right;">423</div><div class="t" style="top:831.31px;font-size:11.8px;line-height:15px;color:#363636;transform:scaleX(0.9576);transform-origin:100% 0;left:1187.00px;width:120px;text-align:right;">411</div><div class="t" style="top:831.31px;font-size:11.8px;line-height:15px;color:#363636;transform:scaleX(0.9576);transform-origin:100% 0;left:1268.40px;width:120px;text-align:right;">467</div><div class="t" style="top:831.31px;font-size:11.8px;line-height:15px;color:#363636;transform:scaleX(0.9576);transform-origin:100% 0;left:1349.80px;width:120px;text-align:right;">521</div><div class="t" style="top:831.31px;font-size:11.8px;line-height:15px;color:#363636;transform:scaleX(0.9576);transform-origin:100% 0;left:1451.80px;width:120px;text-align:right;">5,196</div><div class="t" style="top:831.31px;font-size:11.8px;line-height:15px;color:#363636;transform:scaleX(0.9576);transform-origin:100% 0;left:1533.20px;width:120px;text-align:right;">4,967</div><div class="t" style="top:831.31px;font-size:11.8px;line-height:15px;color:#e33a3f;transform:scaleX(0.9576);transform-origin:100% 0;left:1616.70px;width:120px;text-align:right;">(229)</div><div class="t" style="top:848.36px;font-size:11.8px;line-height:15px;color:#363636;transform:scaleX(0.9576);transform-origin:50% 0;left:178.80px;width:80px;text-align:center;">EXP01</div><div class="t" style="top:848.36px;font-size:11.8px;line-height:15px;color:#363636;transform:scaleX(0.9576);transform-origin:0 0;left:278.30px;">Salaries and Benefits</div><div class="t" style="top:848.36px;font-size:11.8px;line-height:15px;color:#363636;transform:scaleX(0.9576);transform-origin:100% 0;left:454.40px;width:120px;text-align:right;">0</div><div class="t" style="top:848.36px;font-size:11.8px;line-height:15px;color:#363636;transform:scaleX(0.9576);transform-origin:100% 0;left:535.80px;width:120px;text-align:right;">0</div><div class="t" style="top:848.36px;font-size:11.8px;line-height:15px;color:#363636;transform:scaleX(0.9576);transform-origin:100% 0;left:617.20px;width:120px;text-align:right;">0</div><div class="t" style="top:848.36px;font-size:11.8px;line-height:15px;color:#363636;transform:scaleX(0.9576);transform-origin:100% 0;left:698.60px;width:120px;text-align:right;">0</div><div class="t" style="top:848.36px;font-size:11.8px;line-height:15px;color:#363636;transform:scaleX(0.9576);transform-origin:100% 0;left:780.00px;width:120px;text-align:right;">0</div><div class="t" style="top:848.36px;font-size:11.8px;line-height:15px;color:#363636;transform:scaleX(0.9576);transform-origin:100% 0;left:861.40px;width:120px;text-align:right;">0</div><div class="t" style="top:848.36px;font-size:11.8px;line-height:15px;color:#363636;transform:scaleX(0.9576);transform-origin:100% 0;left:942.80px;width:120px;text-align:right;">0</div><div class="t" style="top:848.36px;font-size:11.8px;line-height:15px;color:#363636;transform:scaleX(0.9576);transform-origin:100% 0;left:1024.20px;width:120px;text-align:right;">0</div><div class="t" style="top:848.36px;font-size:11.8px;line-height:15px;color:#363636;transform:scaleX(0.9576);transform-origin:100% 0;left:1105.60px;width:120px;text-align:right;">0</div><div class="t" style="top:848.36px;font-size:11.8px;line-height:15px;color:#363636;transform:scaleX(0.9576);transform-origin:100% 0;left:1187.00px;width:120px;text-align:right;">0</div><div class="t" style="top:848.36px;font-size:11.8px;line-height:15px;color:#363636;transform:scaleX(0.9576);transform-origin:100% 0;left:1268.40px;width:120px;text-align:right;">0</div><div class="t" style="top:848.36px;font-size:11.8px;line-height:15px;color:#363636;transform:scaleX(0.9576);transform-origin:100% 0;left:1349.80px;width:120px;text-align:right;">0</div><div class="t" style="top:848.36px;font-size:11.8px;line-height:15px;color:#363636;transform:scaleX(0.9576);transform-origin:100% 0;left:1451.80px;width:120px;text-align:right;">0</div><div class="t" style="top:848.36px;font-size:11.8px;line-height:15px;color:#363636;transform:scaleX(0.9576);transform-origin:100% 0;left:1533.20px;width:120px;text-align:right;">0</div><div class="t" style="top:848.36px;font-size:11.8px;line-height:15px;color:#363636;transform:scaleX(0.9576);transform-origin:100% 0;left:1613.70px;width:120px;text-align:right;">0</div><div class="t" style="top:864.93px;font-size:13.2px;line-height:16px;color:#363636;transform:scaleX(0.9470);transform-origin:0 0;left:162.80px;">Salaries and Benefits</div><div class="t" style="top:864.93px;font-size:13.2px;line-height:16px;color:#363636;transform:scaleX(0.9470);transform-origin:100% 0;left:454.40px;width:120px;text-align:right;">140,334</div><div class="t" style="top:864.93px;font-size:13.2px;line-height:16px;color:#363636;transform:scaleX(0.9470);transform-origin:100% 0;left:535.80px;width:120px;text-align:right;">130,452</div><div class="t" style="top:864.93px;font-size:13.2px;line-height:16px;color:#363636;transform:scaleX(0.9470);transform-origin:100% 0;left:617.20px;width:120px;text-align:right;">137,674</div><div class="t" style="top:864.93px;font-size:13.2px;line-height:16px;color:#363636;transform:scaleX(0.9470);transform-origin:100% 0;left:698.60px;width:120px;text-align:right;">116,210</div><div class="t" style="top:864.93px;font-size:13.2px;line-height:16px;color:#363636;transform:scaleX(0.9470);transform-origin:100% 0;left:780.00px;width:120px;text-align:right;">113,588</div><div class="t" style="top:864.93px;font-size:13.2px;line-height:16px;color:#363636;transform:scaleX(0.9470);transform-origin:100% 0;left:861.40px;width:120px;text-align:right;">160,148</div><div class="t" style="top:864.93px;font-size:13.2px;line-height:16px;color:#363636;transform:scaleX(0.9470);transform-origin:100% 0;left:942.80px;width:120px;text-align:right;">153,858</div><div class="t" style="top:864.93px;font-size:13.2px;line-height:16px;color:#363636;transform:scaleX(0.9470);transform-origin:100% 0;left:1024.20px;width:120px;text-align:right;">156,931</div><div class="t" style="top:864.93px;font-size:13.2px;line-height:16px;color:#363636;transform:scaleX(0.9470);transform-origin:100% 0;left:1105.60px;width:120px;text-align:right;">124,724</div><div class="t" style="top:864.93px;font-size:13.2px;line-height:16px;color:#363636;transform:scaleX(0.9470);transform-origin:100% 0;left:1187.00px;width:120px;text-align:right;">143,742</div><div class="t" style="top:864.93px;font-size:13.2px;line-height:16px;color:#363636;transform:scaleX(0.9470);transform-origin:100% 0;left:1268.40px;width:120px;text-align:right;">145,981</div><div class="t" style="top:864.93px;font-size:13.2px;line-height:16px;color:#363636;transform:scaleX(0.9470);transform-origin:100% 0;left:1349.80px;width:120px;text-align:right;">196,119</div><div class="t" style="top:864.93px;font-size:13.2px;line-height:16px;color:#363636;transform:scaleX(0.9470);transform-origin:100% 0;left:1451.80px;width:120px;text-align:right;">1,719,762</div><div class="t" style="top:864.93px;font-size:13.2px;line-height:16px;color:#363636;transform:scaleX(0.9470);transform-origin:100% 0;left:1533.20px;width:120px;text-align:right;">1,697,547</div><div class="t" style="top:864.93px;font-size:13.2px;line-height:16px;color:#e33a3f;transform:scaleX(0.9470);transform-origin:100% 0;left:1616.70px;width:120px;text-align:right;">(22,215)</div><div class="t" style="top:883.86px;font-size:11.8px;line-height:15px;color:#363636;transform:scaleX(0.9576);transform-origin:100% 0;left:454.40px;width:120px;text-align:right;">0</div><div class="t" style="top:883.86px;font-size:11.8px;line-height:15px;color:#363636;transform:scaleX(0.9576);transform-origin:100% 0;left:535.80px;width:120px;text-align:right;">0</div><div class="t" style="top:883.86px;font-size:11.8px;line-height:15px;color:#363636;transform:scaleX(0.9576);transform-origin:100% 0;left:617.20px;width:120px;text-align:right;">0</div><div class="t" style="top:883.86px;font-size:11.8px;line-height:15px;color:#363636;transform:scaleX(0.9576);transform-origin:100% 0;left:698.60px;width:120px;text-align:right;">0</div><div class="t" style="top:883.86px;font-size:11.8px;line-height:15px;color:#363636;transform:scaleX(0.9576);transform-origin:100% 0;left:780.00px;width:120px;text-align:right;">0</div><div class="t" style="top:883.86px;font-size:11.8px;line-height:15px;color:#363636;transform:scaleX(0.9576);transform-origin:100% 0;left:861.40px;width:120px;text-align:right;">0</div><div class="t" style="top:883.86px;font-size:11.8px;line-height:15px;color:#363636;transform:scaleX(0.9576);transform-origin:100% 0;left:942.80px;width:120px;text-align:right;">0</div><div class="t" style="top:883.86px;font-size:11.8px;line-height:15px;color:#363636;transform:scaleX(0.9576);transform-origin:100% 0;left:1024.20px;width:120px;text-align:right;">0</div><div class="t" style="top:883.86px;font-size:11.8px;line-height:15px;color:#363636;transform:scaleX(0.9576);transform-origin:100% 0;left:1105.60px;width:120px;text-align:right;">0</div><div class="t" style="top:883.86px;font-size:11.8px;line-height:15px;color:#363636;transform:scaleX(0.9576);transform-origin:100% 0;left:1187.00px;width:120px;text-align:right;">0</div><div class="t" style="top:883.86px;font-size:11.8px;line-height:15px;color:#363636;transform:scaleX(0.9576);transform-origin:100% 0;left:1268.40px;width:120px;text-align:right;">0</div><div class="t" style="top:883.86px;font-size:11.8px;line-height:15px;color:#363636;transform:scaleX(0.9576);transform-origin:100% 0;left:1349.80px;width:120px;text-align:right;">0</div><div class="t" style="top:883.86px;font-size:11.8px;line-height:15px;color:#363636;transform:scaleX(0.9576);transform-origin:100% 0;left:1451.80px;width:120px;text-align:right;">0</div><div class="t" style="top:883.86px;font-size:11.8px;line-height:15px;color:#363636;transform:scaleX(0.9576);transform-origin:100% 0;left:1533.20px;width:120px;text-align:right;">0</div><div class="t" style="top:883.86px;font-size:11.8px;line-height:15px;color:#363636;transform:scaleX(0.9576);transform-origin:100% 0;left:1613.70px;width:120px;text-align:right;">0</div><div class="t" style="top:900.91px;font-size:11.8px;line-height:15px;color:#363636;transform:scaleX(0.9576);transform-origin:50% 0;left:178.80px;width:80px;text-align:center;">62010</div><div class="t" style="top:900.91px;font-size:11.8px;line-height:15px;color:#363636;transform:scaleX(0.9576);transform-origin:0 0;left:278.30px;">Marketing</div><div class="t" style="top:900.91px;font-size:11.8px;line-height:15px;color:#363636;transform:scaleX(0.9576);transform-origin:100% 0;left:454.40px;width:120px;text-align:right;">167,612</div><div class="t" style="top:900.91px;font-size:11.8px;line-height:15px;color:#363636;transform:scaleX(0.9576);transform-origin:100% 0;left:535.80px;width:120px;text-align:right;">161,207</div><div class="t" style="top:900.91px;font-size:11.8px;line-height:15px;color:#363636;transform:scaleX(0.9576);transform-origin:100% 0;left:617.20px;width:120px;text-align:right;">157,275</div><div class="t" style="top:900.91px;font-size:11.8px;line-height:15px;color:#363636;transform:scaleX(0.9576);transform-origin:100% 0;left:698.60px;width:120px;text-align:right;">149,686</div><div class="t" style="top:900.91px;font-size:11.8px;line-height:15px;color:#363636;transform:scaleX(0.9576);transform-origin:100% 0;left:780.00px;width:120px;text-align:right;">123,551</div><div class="t" style="top:900.91px;font-size:11.8px;line-height:15px;color:#363636;transform:scaleX(0.9576);transform-origin:100% 0;left:861.40px;width:120px;text-align:right;">194,580</div><div class="t" style="top:900.91px;font-size:11.8px;line-height:15px;color:#363636;transform:scaleX(0.9576);transform-origin:100% 0;left:942.80px;width:120px;text-align:right;">194,115</div><div class="t" style="top:900.91px;font-size:11.8px;line-height:15px;color:#363636;transform:scaleX(0.9576);transform-origin:100% 0;left:1024.20px;width:120px;text-align:right;">192,819</div><div class="t" style="top:900.91px;font-size:11.8px;line-height:15px;color:#363636;transform:scaleX(0.9576);transform-origin:100% 0;left:1105.60px;width:120px;text-align:right;">162,086</div><div class="t" style="top:900.91px;font-size:11.8px;line-height:15px;color:#363636;transform:scaleX(0.9576);transform-origin:100% 0;left:1187.00px;width:120px;text-align:right;">176,417</div><div class="t" style="top:900.91px;font-size:11.8px;line-height:15px;color:#363636;transform:scaleX(0.9576);transform-origin:100% 0;left:1268.40px;width:120px;text-align:right;">183,860</div><div class="t" style="top:900.91px;font-size:11.8px;line-height:15px;color:#363636;transform:scaleX(0.9576);transform-origin:100% 0;left:1349.80px;width:120px;text-align:right;">225,505</div><div class="t" style="top:900.91px;font-size:11.8px;line-height:15px;color:#363636;transform:scaleX(0.9576);transform-origin:100% 0;left:1451.80px;width:120px;text-align:right;">2,088,712</div><div class="t" style="top:900.91px;font-size:11.8px;line-height:15px;color:#363636;transform:scaleX(0.9576);transform-origin:100% 0;left:1533.20px;width:120px;text-align:right;">1,923,948</div><div class="t" style="top:900.91px;font-size:11.8px;line-height:15px;color:#e33a3f;transform:scaleX(0.9576);transform-origin:100% 0;left:1616.70px;width:120px;text-align:right;">(164,764)</div><div class="t" style="top:917.96px;font-size:11.8px;line-height:15px;color:#363636;transform:scaleX(0.9576);transform-origin:50% 0;left:178.80px;width:80px;text-align:center;">62020</div><div class="t" style="top:917.96px;font-size:11.8px;line-height:15px;color:#363636;transform:scaleX(0.9576);transform-origin:0 0;left:278.30px;">Conference and seminars</div><div class="t" style="top:917.96px;font-size:11.8px;line-height:15px;color:#363636;transform:scaleX(0.9576);transform-origin:100% 0;left:454.40px;width:120px;text-align:right;">1,399</div><div class="t" style="top:917.96px;font-size:11.8px;line-height:15px;color:#363636;transform:scaleX(0.9576);transform-origin:100% 0;left:535.80px;width:120px;text-align:right;">1,249</div><div class="t" style="top:917.96px;font-size:11.8px;line-height:15px;color:#363636;transform:scaleX(0.9576);transform-origin:100% 0;left:617.20px;width:120px;text-align:right;">1,576</div><div class="t" style="top:917.96px;font-size:11.8px;line-height:15px;color:#363636;transform:scaleX(0.9576);transform-origin:100% 0;left:698.60px;width:120px;text-align:right;">1,210</div><div class="t" style="top:917.96px;font-size:11.8px;line-height:15px;color:#363636;transform:scaleX(0.9576);transform-origin:100% 0;left:780.00px;width:120px;text-align:right;">1,159</div><div class="t" style="top:917.96px;font-size:11.8px;line-height:15px;color:#363636;transform:scaleX(0.9576);transform-origin:100% 0;left:861.40px;width:120px;text-align:right;">1,585</div><div class="t" style="top:917.96px;font-size:11.8px;line-height:15px;color:#363636;transform:scaleX(0.9576);transform-origin:100% 0;left:942.80px;width:120px;text-align:right;">1,731</div><div class="t" style="top:917.96px;font-size:11.8px;line-height:15px;color:#363636;transform:scaleX(0.9576);transform-origin:100% 0;left:1024.20px;width:120px;text-align:right;">1,653</div><div class="t" style="top:917.96px;font-size:11.8px;line-height:15px;color:#363636;transform:scaleX(0.9576);transform-origin:100% 0;left:1105.60px;width:120px;text-align:right;">1,256</div><div class="t" style="top:917.96px;font-size:11.8px;line-height:15px;color:#363636;transform:scaleX(0.9576);transform-origin:100% 0;left:1187.00px;width:120px;text-align:right;">1,343</div><div class="t" style="top:917.96px;font-size:11.8px;line-height:15px;color:#363636;transform:scaleX(0.9576);transform-origin:100% 0;left:1268.40px;width:120px;text-align:right;">1,424</div><div class="t" style="top:917.96px;font-size:11.8px;line-height:15px;color:#363636;transform:scaleX(0.9576);transform-origin:100% 0;left:1349.80px;width:120px;text-align:right;">1,853</div><div class="t" style="top:917.96px;font-size:11.8px;line-height:15px;color:#363636;transform:scaleX(0.9576);transform-origin:100% 0;left:1451.80px;width:120px;text-align:right;">17,437</div><div class="t" style="top:917.96px;font-size:11.8px;line-height:15px;color:#363636;transform:scaleX(0.9576);transform-origin:100% 0;left:1533.20px;width:120px;text-align:right;">17,649</div><div class="t" style="top:917.96px;font-size:11.8px;line-height:15px;color:#363636;transform:scaleX(0.9576);transform-origin:100% 0;left:1613.70px;width:120px;text-align:right;">212</div><div class="t" style="top:935.01px;font-size:11.8px;line-height:15px;color:#363636;transform:scaleX(0.9576);transform-origin:50% 0;left:178.80px;width:80px;text-align:center;">62030</div><div class="t" style="top:935.01px;font-size:11.8px;line-height:15px;color:#363636;transform:scaleX(0.9576);transform-origin:0 0;left:278.30px;">Advertising</div><div class="t" style="top:935.01px;font-size:11.8px;line-height:15px;color:#363636;transform:scaleX(0.9576);transform-origin:100% 0;left:454.40px;width:120px;text-align:right;">427</div><div class="t" style="top:935.01px;font-size:11.8px;line-height:15px;color:#363636;transform:scaleX(0.9576);transform-origin:100% 0;left:535.80px;width:120px;text-align:right;">431</div><div class="t" style="top:935.01px;font-size:11.8px;line-height:15px;color:#363636;transform:scaleX(0.9576);transform-origin:100% 0;left:617.20px;width:120px;text-align:right;">484</div><div class="t" style="top:935.01px;font-size:11.8px;line-height:15px;color:#363636;transform:scaleX(0.9576);transform-origin:100% 0;left:698.60px;width:120px;text-align:right;">421</div><div class="t" style="top:935.01px;font-size:11.8px;line-height:15px;color:#363636;transform:scaleX(0.9576);transform-origin:100% 0;left:780.00px;width:120px;text-align:right;">392</div><div class="t" style="top:935.01px;font-size:11.8px;line-height:15px;color:#363636;transform:scaleX(0.9576);transform-origin:100% 0;left:861.40px;width:120px;text-align:right;">593</div><div class="t" style="top:935.01px;font-size:11.8px;line-height:15px;color:#363636;transform:scaleX(0.9576);transform-origin:100% 0;left:942.80px;width:120px;text-align:right;">529</div><div class="t" style="top:935.01px;font-size:11.8px;line-height:15px;color:#363636;transform:scaleX(0.9576);transform-origin:100% 0;left:1024.20px;width:120px;text-align:right;">628</div><div class="t" style="top:935.01px;font-size:11.8px;line-height:15px;color:#363636;transform:scaleX(0.9576);transform-origin:100% 0;left:1105.60px;width:120px;text-align:right;">442</div><div class="t" style="top:935.01px;font-size:11.8px;line-height:15px;color:#363636;transform:scaleX(0.9576);transform-origin:100% 0;left:1187.00px;width:120px;text-align:right;">443</div><div class="t" style="top:935.01px;font-size:11.8px;line-height:15px;color:#363636;transform:scaleX(0.9576);transform-origin:100% 0;left:1268.40px;width:120px;text-align:right;">481</div><div class="t" style="top:935.01px;font-size:11.8px;line-height:15px;color:#363636;transform:scaleX(0.9576);transform-origin:100% 0;left:1349.80px;width:120px;text-align:right;">742</div><div class="t" style="top:935.01px;font-size:11.8px;line-height:15px;color:#363636;transform:scaleX(0.9576);transform-origin:100% 0;left:1451.80px;width:120px;text-align:right;">6,012</div><div class="t" style="top:935.01px;font-size:11.8px;line-height:15px;color:#363636;transform:scaleX(0.9576);transform-origin:100% 0;left:1533.20px;width:120px;text-align:right;">5,881</div><div class="t" style="top:935.01px;font-size:11.8px;line-height:15px;color:#e33a3f;transform:scaleX(0.9576);transform-origin:100% 0;left:1616.70px;width:120px;text-align:right;">(131)</div><div class="t" style="top:952.06px;font-size:11.8px;line-height:15px;color:#363636;transform:scaleX(0.9576);transform-origin:50% 0;left:178.80px;width:80px;text-align:center;">62040</div><div class="t" style="top:952.06px;font-size:11.8px;line-height:15px;color:#363636;transform:scaleX(0.9576);transform-origin:0 0;left:278.30px;">Gift and donations</div><div class="t" style="top:952.06px;font-size:11.8px;line-height:15px;color:#363636;transform:scaleX(0.9576);transform-origin:100% 0;left:454.40px;width:120px;text-align:right;">44</div><div class="t" style="top:952.06px;font-size:11.8px;line-height:15px;color:#363636;transform:scaleX(0.9576);transform-origin:100% 0;left:535.80px;width:120px;text-align:right;">50</div><div class="t" style="top:952.06px;font-size:11.8px;line-height:15px;color:#363636;transform:scaleX(0.9576);transform-origin:100% 0;left:617.20px;width:120px;text-align:right;">53</div><div class="t" style="top:952.06px;font-size:11.8px;line-height:15px;color:#363636;transform:scaleX(0.9576);transform-origin:100% 0;left:698.60px;width:120px;text-align:right;">44</div><div class="t" style="top:952.06px;font-size:11.8px;line-height:15px;color:#363636;transform:scaleX(0.9576);transform-origin:100% 0;left:780.00px;width:120px;text-align:right;">35</div><div class="t" style="top:952.06px;font-size:11.8px;line-height:15px;color:#363636;transform:scaleX(0.9576);transform-origin:100% 0;left:861.40px;width:120px;text-align:right;">62</div><div class="t" style="top:952.06px;font-size:11.8px;line-height:15px;color:#363636;transform:scaleX(0.9576);transform-origin:100% 0;left:942.80px;width:120px;text-align:right;">60</div><div class="t" style="top:952.06px;font-size:11.8px;line-height:15px;color:#363636;transform:scaleX(0.9576);transform-origin:100% 0;left:1024.20px;width:120px;text-align:right;">54</div><div class="t" style="top:952.06px;font-size:11.8px;line-height:15px;color:#363636;transform:scaleX(0.9576);transform-origin:100% 0;left:1105.60px;width:120px;text-align:right;">43</div><div class="t" style="top:952.06px;font-size:11.8px;line-height:15px;color:#363636;transform:scaleX(0.9576);transform-origin:100% 0;left:1187.00px;width:120px;text-align:right;">50</div><div class="t" style="top:952.06px;font-size:11.8px;line-height:15px;color:#363636;transform:scaleX(0.9576);transform-origin:100% 0;left:1268.40px;width:120px;text-align:right;">55</div><div class="t" style="top:952.06px;font-size:11.8px;line-height:15px;color:#363636;transform:scaleX(0.9576);transform-origin:100% 0;left:1349.80px;width:120px;text-align:right;">68</div><div class="t" style="top:952.06px;font-size:11.8px;line-height:15px;color:#363636;transform:scaleX(0.9576);transform-origin:100% 0;left:1451.80px;width:120px;text-align:right;">618</div><div class="t" style="top:952.06px;font-size:11.8px;line-height:15px;color:#363636;transform:scaleX(0.9576);transform-origin:100% 0;left:1533.20px;width:120px;text-align:right;">581</div><div class="t" style="top:952.06px;font-size:11.8px;line-height:15px;color:#e33a3f;transform:scaleX(0.9576);transform-origin:100% 0;left:1616.70px;width:120px;text-align:right;">(36)</div><svg style="left:184px;top:195px" width="56" height="28" viewBox="0 0 56 28"><path d="M23 11.2 Q32 5.5 41 1.8 L35.2 11 Q29 10.4 23 11.2Z" fill="#2a6db8"/><path d="M41 1.8 L50.2 11.6 Q42.5 10.3 35.2 11 Z" fill="#8cc43f"/></svg><div class="t" style="top:201.35px;font-size:19.2px;line-height:24px;color:#1f1f1f;transform:scaleX(0.9958);transform-origin:0 0;left:185.30px;">solver</div><div class="t" style="top:204.75px;font-size:14.3px;line-height:18px;color:#4a7bbd;transform:scaleX(1.1130);transform-origin:0 0;left:254.80px;-webkit-text-stroke:0.35px #4a7bbd;">Profit and Loss - Act vs Fcst Variance</div><div class="t" style="top:231.97px;font-size:12.5px;line-height:16px;color:#2f74c0;font-weight:bold;transform:scaleX(0.9470);transform-origin:0 0;left:162.40px;">Corporate US</div><div class="t" style="top:248.67px;font-size:12.5px;line-height:16px;color:#2f74c0;font-weight:bold;transform:scaleX(0.9295);transform-origin:0 0;left:162.40px;">Forecast Small Change</div><div class="t" style="top:265.67px;font-size:12.5px;line-height:16px;color:#2f74c0;font-weight:bold;transform:scaleX(0.9614);transform-origin:0 0;left:162.40px;">Last Actual Period:&nbsp;&nbsp;&nbsp;Mar-2021</div><div class="t" style="top:231.50px;font-size:13px;line-height:16px;color:#4a7bbd;font-weight:bold;transform:scaleX(1.0200);transform-origin:0 0;left:1705.40px;">5/17/20 1:15 PM</div></div></div><div class="a" style="left:116px;top:182px;width:1.50px;height:792.00px;background:#cdcdcd;"></div><div class="a" style="left:150.8px;top:182px;width:1.20px;height:792.00px;background:#c4c4c4;"></div><div class="a" style="left:126.5px;top:644px;width:1.20px;height:221.30px;background:#9a9a9a;"></div><div class="a" style="left:126.5px;top:644px;width:5.00px;height:1.20px;background:#9a9a9a;"></div><div class="a" style="left:119.3px;top:865.3px;width:16.3px;height:16.6px;border:1px solid #9a9a9a;background:#ececec"></div><div class="a" style="left:123px;top:873px;width:8.50px;height:1.80px;background:#5a5a5a;"></div><div class="a" style="left:126.5px;top:881.9px;width:1.20px;height:92.10px;background:#9a9a9a;"></div><div class="a" style="left:126.5px;top:884.6px;width:5.00px;height:1.20px;background:#9a9a9a;"></div><div class="a" style="left:143.6px;top:651.4px;width:1.30px;height:1.30px;background:#7a7a7a;"></div><div class="a" style="left:143.6px;top:668.4499999999999px;width:1.30px;height:1.30px;background:#7a7a7a;"></div><div class="a" style="left:143.6px;top:685.5px;width:1.30px;height:1.30px;background:#7a7a7a;"></div><div class="a" style="left:143.6px;top:702.55px;width:1.30px;height:1.30px;background:#7a7a7a;"></div><div class="a" style="left:143.6px;top:719.6px;width:1.30px;height:1.30px;background:#7a7a7a;"></div><div class="a" style="left:143.6px;top:736.65px;width:1.30px;height:1.30px;background:#7a7a7a;"></div><div class="a" style="left:143.6px;top:753.6999999999999px;width:1.30px;height:1.30px;background:#7a7a7a;"></div><div class="a" style="left:143.6px;top:770.75px;width:1.30px;height:1.30px;background:#7a7a7a;"></div><div class="a" style="left:143.6px;top:787.8px;width:1.30px;height:1.30px;background:#7a7a7a;"></div><div class="a" style="left:143.6px;top:804.85px;width:1.30px;height:1.30px;background:#7a7a7a;"></div><div class="a" style="left:143.6px;top:821.9px;width:1.30px;height:1.30px;background:#7a7a7a;"></div><div class="a" style="left:143.6px;top:838.9499999999999px;width:1.30px;height:1.30px;background:#7a7a7a;"></div><div class="a" style="left:143.6px;top:856.0px;width:1.30px;height:1.30px;background:#7a7a7a;"></div><div class="a" style="left:143.6px;top:891.5px;width:1.30px;height:1.30px;background:#7a7a7a;"></div><div class="a" style="left:143.6px;top:908.55px;width:1.30px;height:1.30px;background:#7a7a7a;"></div><div class="a" style="left:143.6px;top:925.6px;width:1.30px;height:1.30px;background:#7a7a7a;"></div><div class="a" style="left:143.6px;top:942.65px;width:1.30px;height:1.30px;background:#7a7a7a;"></div><div class="a" style="left:143.6px;top:959.7px;width:1.30px;height:1.30px;background:#7a7a7a;"></div><div class="a" style="left:116px;top:974px;width:1677.00px;height:1.00px;background:#c3c3c3;"></div><svg style="left:139px;top:980px" width="10" height="12" viewBox="0 0 10 12"><path d="M7 2 L3 6 L7 10Z" fill="#c2c2c2"/></svg><svg style="left:166px;top:980px" width="10" height="12" viewBox="0 0 10 12"><path d="M3 2 L7 6 L3 10Z" fill="#c2c2c2"/></svg><div class="a" style="left:211px;top:974px;width:93.4px;height:23px;background:#fff;border-left:1px solid #c3c3c3;border-right:1px solid #c3c3c3"></div><div class="a" style="left:211px;top:995px;width:93.40px;height:2.00px;background:#2b7a50;"></div><div class="t" style="top:976.86px;font-size:12.8px;line-height:16px;color:#2a7a50;font-weight:bold;transform:scaleX(0.9440);transform-origin:50% 0;left:198.00px;width:120px;text-align:center;">PL Trending</div><div class="a" style="left:1096px;top:984px;width:1.30px;height:1.20px;background:#9a9a9a;"></div><div class="a" style="left:1096px;top:987.5px;width:1.30px;height:1.20px;background:#9a9a9a;"></div><div class="a" style="left:1096px;top:991px;width:1.30px;height:1.20px;background:#9a9a9a;"></div><div class="a" style="left:1110.3px;top:980.3px;width:648.10px;height:14.00px;background:#dadada;"></div><div class="a" style="left:1110.3px;top:980.3px;width:13.4px;height:14px;background:#fff;border:1px solid #c6c6c6"></div><svg style="left:1112px;top:981px" width="10" height="12" viewBox="0 0 10 12"><path d="M6.8 3 L3.2 6 L6.8 9Z" fill="#555"/></svg><div class="a" style="left:1123.7px;top:980.3px;width:307.6px;height:14px;background:#fff;border:1px solid #c6c6c6"></div><div class="a" style="left:1758.4px;top:980.5px;width:13.8px;height:13.5px;background:#fff;border:1px solid #c6c6c6"></div><svg style="left:1760px;top:981px" width="10" height="12" viewBox="0 0 10 12"><path d="M3.5 3 L7.1 6 L3.5 9Z" fill="#555"/></svg><div class="a" style="left:1775.6px;top:183px;width:15.40px;height:789.20px;background:#dadada;"></div><div class="a" style="left:1775.6px;top:183px;width:15.4px;height:13.5px;background:#fff;border:1px solid #c6c6c6"></div><svg style="left:1777px;top:184px" width="12" height="12" viewBox="0 0 12 12"><path d="M3 7.5 L6 4.5 L9 7.5Z" fill="#555"/></svg><div class="a" style="left:1775.6px;top:196px;width:15.4px;height:61.5px;background:#fff;border:1px solid #c6c6c6"></div><div class="a" style="left:1776.7px;top:958.4px;width:13.2px;height:13.8px;background:#fff;border:1px solid #c6c6c6"></div><svg style="left:1777px;top:959px" width="12" height="12" viewBox="0 0 12 12"><path d="M3 4.5 L6 7.5 L9 4.5Z" fill="#555"/></svg><div class="a" style="left:0;top:0;z-index:5"><div class="a" style="left:56px;top:0px;width:1746.00px;height:38.00px;background:#ffffff;box-shadow:0 1px 3px rgba(0,0,0,0.10)"></div><div class="a" style="left:69px;top:13.4px;width:9.50px;height:1.60px;background:#333;"></div><div class="a" style="left:69px;top:17.3px;width:9.50px;height:1.60px;background:#333;"></div><div class="a" style="left:69px;top:21.1px;width:9.50px;height:1.60px;background:#333;"></div><div class="t" style="top:10.05px;font-size:14px;line-height:18px;color:#939393;transform:scaleX(1.0966);transform-origin:0 0;left:101.00px;">Live Reporting</div><svg style="left:211px;top:13px" width="10" height="12" viewBox="0 0 10 12"><path d="M2 1.8 L7.5 6 L2 10.2" fill="none" stroke="#3a7bd5" stroke-width="1.5"/></svg><div class="t" style="top:10.05px;font-size:14px;line-height:18px;color:#939393;transform:scaleX(1.0811);transform-origin:0 0;left:231.20px;">R902 - P&amp;L - Act vs Fcst</div><svg style="left:1383px;top:9px" width="16" height="18" viewBox="0 0 16 18"><path d="M7 2 Q7 1 8 1 Q9 1 9 2 Q12.5 3 12.5 8 V12 L14 14 H2 L3.5 12 V8 Q3.5 3 7 2Z" fill="#111"/><circle cx="8" cy="15.5" r="1.6" fill="#111"/></svg><div class="t" style="top:10.67px;font-size:12.5px;line-height:16px;color:#8d8d8d;transform:scaleX(0.9694);transform-origin:0 0;left:1403.00px;">Notifications</div><svg style="left:1474px;top:16px" width="10" height="8" viewBox="0 0 10 8"><path d="M1 1.5 L4.5 5 L8 1.5" fill="none" stroke="#aaa" stroke-width="1.2"/></svg><svg style="left:1502px;top:9px" width="16" height="16" viewBox="0 0 16 16"><circle cx="8" cy="8" r="6.6" fill="none" stroke="#111" stroke-width="1.5"/><circle cx="5.8" cy="6.2" r="1.1" fill="#111"/><circle cx="10.2" cy="6.2" r="1.1" fill="#111"/><path d="M4.5 9.3 Q8 13 11.5 9.3" fill="none" stroke="#111" stroke-width="1.4"/></svg><div class="t" style="top:10.67px;font-size:12.5px;line-height:16px;color:#8d8d8d;transform:scaleX(0.9290);transform-origin:0 0;left:1522.70px;">Feedback</div><svg style="left:1593px;top:9px" width="16" height="16" viewBox="0 0 16 16"><circle cx="7.7" cy="8" r="6.5" fill="none" stroke="#111" stroke-width="1.5"/><path d="M5.5 6.3 Q5.5 3.8 7.8 3.8 Q10.2 3.8 10.2 6 Q10.2 7.6 8 8.5 V10" fill="none" stroke="#111" stroke-width="1.6"/><circle cx="8" cy="12" r="1" fill="#111"/></svg><div class="t" style="top:10.67px;font-size:12.5px;line-height:16px;color:#8d8d8d;transform:scaleX(0.9335);transform-origin:0 0;left:1613.50px;">Help</div><div class="a" style="left:1656px;top:9.5px;width:1.50px;height:18.00px;background:#c8c8c8;"></div><svg style="left:1679px;top:9px" width="12" height="17" viewBox="0 0 12 17"><circle cx="5" cy="5" r="4.2" fill="#000"/><path d="M0.5 15 Q0.5 9.5 5 9.5 Q9.5 9.5 9.5 15 Q9.5 16.5 5 16.5 Q0.5 16.5 0.5 15Z" fill="#000"/></svg><div class="t" style="top:4.62px;font-size:13.5px;line-height:17px;color:#8a8a8a;transform:scaleX(1.1279);transform-origin:0 0;left:1693.40px;">Nils Rasmussen</div><div class="t" style="top:22.38px;font-size:9px;line-height:11px;color:#b0b0b0;left:1693.40px;">C<span style="font-size:7px">ORP</span>D<span style="font-size:7px">EMO</span> M<span style="font-size:7px">ASTER</span></div></div></div><div id="frame"></div>
</body></html>
